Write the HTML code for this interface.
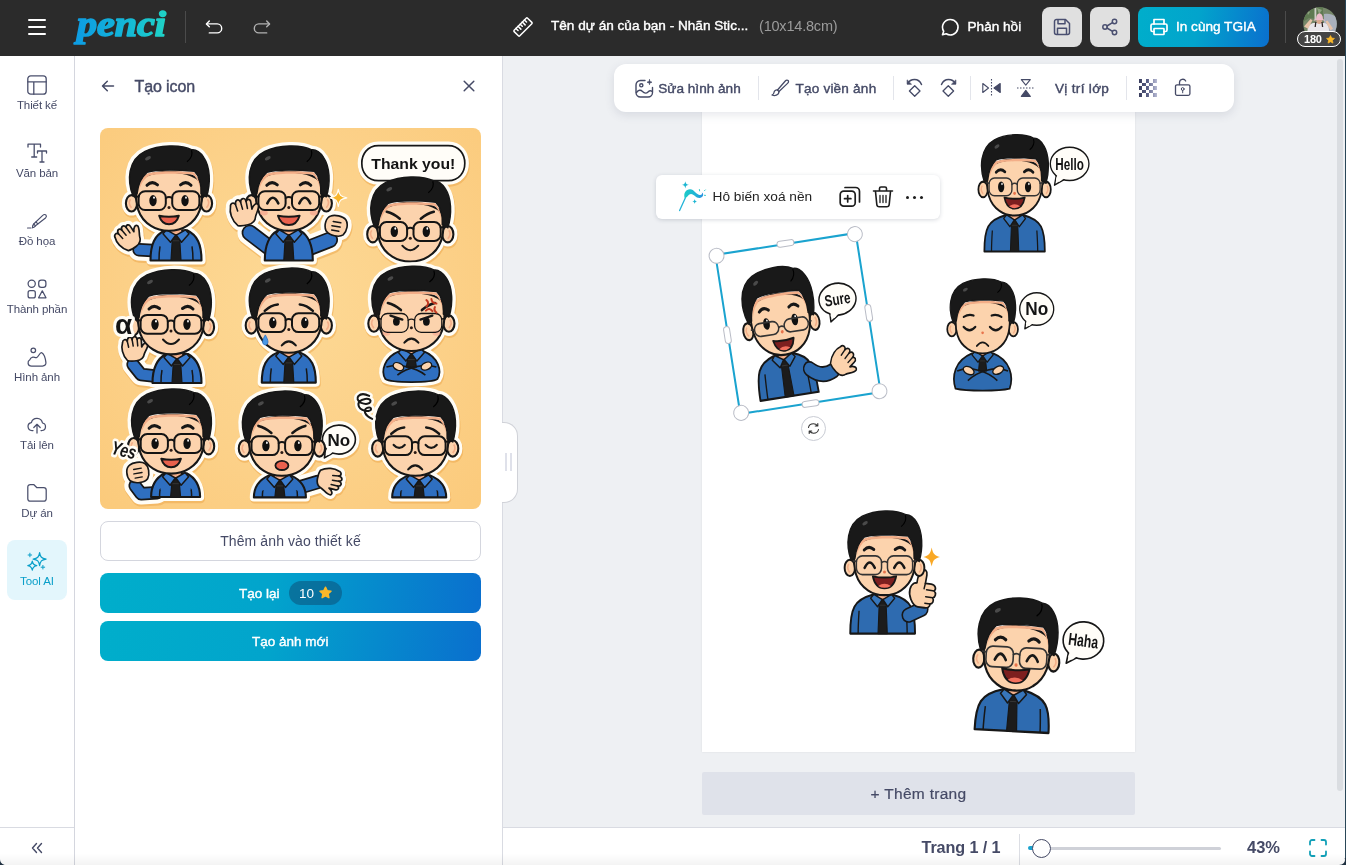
<!DOCTYPE html>
<html lang="vi">
<head>
<meta charset="utf-8">
<title>Penci - Tạo icon</title>
<style>
*{box-sizing:border-box;margin:0;padding:0}
html,body{width:1346px;height:865px;overflow:hidden;background:#eef0f3;-webkit-font-smoothing:antialiased;font-family:"Liberation Sans",sans-serif;color:#454a66}
.abs{position:absolute}
#hdr{position:absolute;left:0;top:0;width:1346px;height:56px;background:#2b2b2b;color:#fff}
#side,#panel,#work,#foot,#hdr{will-change:transform}
#side{position:absolute;left:0;top:56px;width:75px;height:809px;background:#fff;border-right:1px solid #d4d6de}
#panel{z-index:3;position:absolute;left:75px;top:56px;width:428px;height:809px;background:#fff;border-right:1px solid #d9dbe2}
#work{position:absolute;left:503px;top:56px;width:843px;height:771px;background:#eef0f3;overflow:hidden}
#foot{position:absolute;left:503px;top:827px;width:843px;height:38px;background:#fff;border-top:1px solid #d9dbe2}
.nav{position:absolute;left:0;width:74px;text-align:center;font-size:11.5px;color:#454a66;letter-spacing:-0.1px}
.nav svg{display:block;margin:0 auto 4px}
.nav.on{left:7px;width:60px;height:60px;background:#e3f6fc;border-radius:8px;color:#0a9fc9}
svg{overflow:visible}
.sb{-webkit-text-stroke:0.4px currentColor}
.ic{fill:none;stroke:#4a4f6c;stroke-width:1.3;stroke-linecap:round;stroke-linejoin:round}
.btn{position:absolute;left:25px;width:381px;height:40px;border-radius:8px;text-align:center;line-height:40px;font-size:14.5px}
.hd{position:absolute;width:16px;height:16px;border-radius:50%;background:#fff;border:1px solid #b9bcc6}
.hp{position:absolute;background:#fff;border:1px solid #b9bcc6;border-radius:4px}
.grad{background:linear-gradient(100deg,#00aecb 0%,#02a4cc 45%,#0a6fce 100%);color:#fff}
</style>
</head>
<body>
<div id="hdr">
  <div class="abs" style="left:28px;top:18.7px;width:18px;height:2px;background:#fff;border-radius:1px"></div>
  <div class="abs" style="left:28px;top:26px;width:18px;height:2px;background:#fff;border-radius:1px"></div>
  <div class="abs" style="left:28px;top:33.3px;width:18px;height:2px;background:#fff;border-radius:1px"></div>
  <svg class="abs" style="left:70px;top:4px" width="104" height="46" viewBox="0 0 104 46">
    <defs><linearGradient id="lg" x1="0" x2="1" y1="0" y2="0"><stop offset="0" stop-color="#0d9be3"/><stop offset="0.55" stop-color="#13b6d8"/><stop offset="1" stop-color="#1fd3c6"/></linearGradient></defs>
    <text x="7" y="31.500" font-family="Liberation Serif, serif" font-style="italic" font-weight="bold" font-size="35" fill="url(#lg)" stroke="url(#lg)" stroke-width="1.6" stroke-linejoin="round" textLength="89" lengthAdjust="spacingAndGlyphs">penci</text>
  </svg>
  <div class="abs" style="left:185px;top:11px;width:1px;height:32px;background:#4b4b4b"></div>
  <svg class="abs" style="left:204px;top:17px" width="20" height="20" viewBox="0 0 20 20" fill="none" stroke="#fff" stroke-width="1.400" stroke-linecap="round" stroke-linejoin="round"><path d="M5.300 4L2.400 6.900l2.900 2.900"/><path d="M2.700 6.900h10.500a4.500 4.500 0 0 1 0 9H5.300"/></svg>
  <svg class="abs" style="left:252px;top:17px" width="20" height="20" viewBox="0 0 20 20" fill="none" stroke="#b2b2b2" stroke-width="1.400" stroke-linecap="round" stroke-linejoin="round"><path d="M14.700 4l2.900 2.900-2.900 2.900"/><path d="M17.300 6.900H6.800a4.500 4.500 0 0 0 0 9h7.900"/></svg>
  <svg class="abs" style="left:512px;top:16px" width="22" height="22" viewBox="0 0 22 22" fill="none" stroke="#fff" stroke-width="1.500" stroke-linecap="round" stroke-linejoin="round"><g transform="rotate(-45 11 11)"><rect x="1.500" y="7" width="19" height="8" rx="1"/><path d="M5 7v3M8 7v4M11 7v3M14 7v4M17 7v3"/></g></svg>
  <div class="abs sb" id="ttl" style="left:551px;top:18px;font-size:13.6px;color:#fff;white-space:nowrap;letter-spacing:0px">Tên dự án của bạn - Nhãn Stic...</div>
  <div class="abs" id="dim" style="left:759px;top:18px;font-size:14.5px;color:#9b9b9b;white-space:nowrap;letter-spacing:-0.2px">(10x14.8cm)</div>
  <svg class="abs" style="left:940px;top:17px" width="20" height="20" viewBox="0 0 20 20" fill="none" stroke="#fff" stroke-width="1.600" stroke-linecap="round" stroke-linejoin="round"><path d="M10.300 2.500a7.700 7.700 0 1 1-4.100 14.200L2.500 17.800l1.200-3.500A7.700 7.700 0 0 1 10.300 2.500z"/></svg>
  <div class="abs sb" id="ph" style="left:967.5px;top:19px;font-size:13.6px;color:#fff;white-space:nowrap;letter-spacing:0px">Phản hồi</div>
  <div class="abs" style="left:1042px;top:7px;width:40px;height:40px;border-radius:8px;background:#e0e0e0"></div>
  <svg class="abs" style="left:1052px;top:17px" width="20" height="20" viewBox="0 0 20 20" fill="none" stroke="#4a4f70" stroke-width="1.500" stroke-linecap="round" stroke-linejoin="round"><path d="M4.500 2.500h9l4 4v9a2 2 0 0 1-2 2h-11a2 2 0 0 1-2-2v-11a2 2 0 0 1 2-2z"/><path d="M6 2.800v4h7v-4"/><path d="M5.500 17.300v-6h9v6"/></svg>
  <div class="abs" style="left:1090px;top:7px;width:40px;height:40px;border-radius:8px;background:#e0e0e0"></div>
  <svg class="abs" style="left:1100px;top:17px" width="20" height="20" viewBox="0 0 20 20" fill="none" stroke="#4a4f70" stroke-width="1.500" stroke-linecap="round" stroke-linejoin="round"><circle cx="14.500" cy="4.500" r="2.200"/><circle cx="14.500" cy="15.500" r="2.200"/><circle cx="5" cy="10" r="2.200"/><path d="M7 9l5.500-3.400M7 11l5.500 3.400"/></svg>
  <div class="abs grad" style="left:1138px;top:7px;width:131px;height:40px;border-radius:8px"></div>
  <svg class="abs" style="left:1149px;top:17px" width="20" height="20" viewBox="0 0 20 20" fill="none" stroke="#fff" stroke-width="1.700" stroke-linecap="round" stroke-linejoin="round"><path d="M5 7V2.500h10V7"/><path d="M5 14.500H3.500a1.500 1.500 0 0 1-1.500-1.500V8.500A1.500 1.500 0 0 1 3.500 7h13A1.500 1.500 0 0 1 18 8.500V13a1.500 1.500 0 0 1-1.500 1.500H15"/><rect x="5" y="11.500" width="10" height="6" rx="0.500"/></svg>
  <div class="abs sb" id="prt" style="left:1176px;top:19px;font-size:13.6px;color:#fff;white-space:nowrap;letter-spacing:0px">In cùng TGIA</div>
  <div class="abs" style="left:1285px;top:11px;width:1px;height:32px;background:#4b4b4b"></div>
  <svg class="abs" style="left:1302.500px;top:6.500px" width="34" height="34" viewBox="0 0 34 34">
    <defs><clipPath id="avc"><circle cx="17" cy="17" r="16.800"/></clipPath></defs>
    <g clip-path="url(#avc)">
      <rect width="34" height="34" fill="#76876a"/>
      <path d="M0 0h20v9l-6 3-8-1-6 4z" fill="#5f7a52"/>
      <path d="M3 2l4 3-2 3zM14 1l5 2-3 4z" fill="#8fa381"/>
      <path d="M21 7c4-1 8 0 13 3v24H21z" fill="#a9b0bc"/>
      <rect x="11.500" y="0" width="1.800" height="13" fill="#cfd0c8"/>
      <path d="M4.500 24c0-6 4-8 6.500-8h10c3 0 5 3 5 8z" fill="#e9e6ea"/>
      <path d="M1 19.500l6.500-7.500 2 1.300-4.500 8.500zM27.500 23.500l-5-9 2-1 5.500 8z" fill="#e6c2a8"/>
      <ellipse cx="16.200" cy="14.300" rx="2.800" ry="2.600" fill="#d8a78e"/>
      <path d="M13 12.300c0-4 1.800-6 3.500-6s3.500 2 3.500 6c1.200 0.300 1.800 0.800 2 1.500-3-1-8-1-11.500 0 0.200-0.700 1-1.200 2.500-1.500z" fill="#edbccb"/>
      <path d="M12.800 15l-0.600 5M19 15l0.600 5" stroke="#2f2424" stroke-width="1.300" fill="none"/>
    </g>
  </svg>
  <div class="abs" style="left:1297px;top:31px;width:44px;height:16px;border:1px solid #fff;border-radius:8px;background:#454545"></div>
  <div class="abs" id="bdg" style="left:1304px;top:33px;font-size:11px;line-height:12px;font-weight:bold;color:#fff;letter-spacing:-0.2px">180</div>
  <svg class="abs" style="left:1325.500px;top:34.500px" width="9" height="9" viewBox="0 0 24 24"><path d="M12 1.500l3.200 6.700 7.300 1-5.300 5.100 1.300 7.300L12 18.100l-6.500 3.500 1.300-7.300L1.500 9.200l7.300-1z" fill="#fbb829" stroke="#fbb829" stroke-width="2" stroke-linejoin="round"/></svg>
</div>

<div id="side">
  <div class="nav" style="top:19px"><svg width="20" height="20" viewBox="0 0 20 20" class="ic"><rect x="0.800" y="0.800" width="18.400" height="18.400" rx="3"/><path d="M0.800 6.800h18.400M6.800 6.800v12.400"/></svg>Thiết kế</div>
  <div class="nav" style="top:87px"><svg width="20" height="20" viewBox="0 0 20 20" class="ic"><path d="M1 4V1.200h12.500V4M7.200 1.200v12.800M4.700 14h5"/><path d="M10.500 10V8h9v2M15 8v11M13 19h4"/></svg>Văn bản</div>
  <div class="nav" style="top:155px"><svg width="20" height="20" viewBox="0 0 20 20" class="ic" style="stroke-width:1.150"><path d="M0.500 17h3.500"/><path d="M8.500 14.800c-1.500 1.800-3 2-3 2s-0.300-2.200 1.200-3.800z"/><path d="M6.700 13L16 4.200c1-1 2.400-0.800 3 0s0.400 2-0.500 2.800L8.500 14.800"/><path d="M9 11l1.800 1.800"/></svg>Đồ họa</div>
  <div class="nav" style="top:223px"><svg width="20" height="20" viewBox="0 0 20 20" class="ic" style="stroke-width:1.250"><circle cx="4.700" cy="4.700" r="3.600"/><rect x="11.700" y="1.100" width="7.200" height="7.200" rx="2.600"/><rect x="1.100" y="11.700" width="7.200" height="7.200" rx="2"/><path d="M15.300 11.800l3.700 7h-7.400z"/></svg>Thành phần</div>
  <div class="nav" style="top:291px"><svg width="20" height="20" viewBox="0 0 20 20" class="ic" style="stroke-width:1.250"><circle cx="6.300" cy="3.300" r="2.300"/><path d="M2.800 12.800C1.500 13.500 0.900 15 1.100 16.300c0.300 1.700 1.700 2.700 3.400 2.700h11c2.200 0 3.700-1.300 3.400-3.700C18.400 11.500 17 7 14.800 5.800c-2-0.800-3 3.700-5 4.700-1.500 0.600-2.500-0.800-4-0.400-1.500 0.400-2.700 1.500-3 2.700z"/></svg>Hình ảnh</div>
  <div class="nav" style="top:359px"><svg width="20" height="20" viewBox="0 0 20 20" class="ic" style="stroke-width:1.250"><path d="M6 15.500H5a4 4 0 0 1-0.600-7.950A5.700 5.700 0 0 1 15.500 8a3.800 3.800 0 0 1-0.500 7.500h-1"/><path d="M10 18V9.500M6.800 12.500L10 9.300l3.200 3.200"/></svg>Tải lên</div>
  <div class="nav" style="top:427px"><svg width="20" height="20" viewBox="0 0 20 20" class="ic" style="stroke-width:1.250"><path d="M0.800 4a2.500 2.500 0 0 1 2.500-2.500h3.400l3 3h7a2.500 2.500 0 0 1 2.500 2.500v8.700a2.500 2.500 0 0 1-2.500 2.500H3.300a2.500 2.500 0 0 1-2.500-2.500z"/></svg>Dự án</div>
  <div class="nav on" style="top:484px;padding-top:11px"><svg width="20" height="20" viewBox="0 0 20 20" class="ic" style="stroke:#0a9fc9;stroke-width:1.200"><path d="M12.600 1.600c0.700 4.500 2 5.800 6.500 6.500-4.500 0.700-5.800 2-6.500 6.500-0.700-4.500-2-5.800-6.500-6.500 4.500-0.700 5.800-2 6.500-6.500z"/><path d="M5.300 10.100c0.500 3.100 1.400 4 4.500 4.500-3.100 0.500-4 1.400-4.500 4.500-0.500-3.100-1.400-4-4.500-4.500 3.100-0.500 4-1.400 4.500-4.500z"/><path d="M2.900 2.200v3.600M1.100 4h3.600M15.900 14.400v3.600M14.100 16.200h3.600" stroke-width="1"/></svg>Tool AI</div>
  <div class="abs" style="left:0;top:771px;width:74px;height:1px;background:#d9dbe2"></div>
  <svg class="abs" style="left:31px;top:786px" width="12" height="12" viewBox="0 0 12 12" class="ic" fill="none" stroke="#454a66" stroke-width="1.400" stroke-linecap="round" stroke-linejoin="round"><path d="M5.500 1.500L1.500 6l4 4.500M10.500 1.500L6.500 6l4 4.500"/></svg>
</div>

<div id="panel">
  <svg class="abs" style="left:26px;top:23px" width="14" height="14" viewBox="0 0 14 14" fill="none" stroke="#454a66" stroke-width="1.500" stroke-linecap="round" stroke-linejoin="round"><path d="M12.500 7H1.800M6.300 2.200L1.500 7l4.800 4.800"/></svg>
  <div class="abs sb" id="pt" style="left:59.500px;top:21.500px;font-size:16px;color:#454a66;white-space:nowrap;letter-spacing:-0.1px">Tạo icon</div>
  <svg class="abs" style="left:388px;top:24px" width="12" height="12" viewBox="0 0 12 12" fill="none" stroke="#454a66" stroke-width="1.500" stroke-linecap="round"><path d="M1.200 1.200l9.600 9.600M10.800 1.200l-9.600 9.600"/></svg>
  <div class="abs" style="left:25px;top:72px;width:381px;height:381px;border-radius:8px;overflow:hidden;background:radial-gradient(ellipse at 50% 45%,#fdd995 0%,#fcd189 55%,#fbca7b 100%)">
<svg class="abs" style="left:0;top:0" width="381" height="381" viewBox="0 0 381 381"><g transform="translate(69 18.8) scale(1 1)" stroke-linejoin="round"><g transform="translate(0.600 1.800)" fill="#eda94f" stroke="#eda94f" stroke-width="8.8" opacity="0.550"><path d="M-12 104L-30 103" fill="none" stroke-linecap="round" stroke-width="22.2"/><path d="M-8 10C-12.500 4-12.500-4-10.500-8C-10-11.500-6.500-12-5.500-9C-5-13.500-1-14 -0.500-10C0.500-14 4.500-13.500 4.500-9.500C6-12 9-11 8.500-7.500L8-1.500C10-5 13.500-6.500 14.500-4C15-1 11 3 9.500 6C8.500 9.500 5 11.500 1 11.500C-3 11.500-6 11-8 10z" transform="translate(-40.5 91) rotate(-38) scale(1 1)"/><path d="M-18.5 113.7C-18.5 97.5 -14.5 88.5 -4 83.5L18 83.5C28.5 88.5 32.5 97.5 32.5 113.7z"/><path d="M-43.1 56.5a5.6 8.2 0 1 0 11.2 0a5.6 8.2 0 1 0 -11.2 0z"/><path d="M31.9 56.5a5.6 8.2 0 1 0 11.2 0a5.6 8.2 0 1 0 -11.2 0z"/><path d="M-32.5 40C-34 58-31 71-18 79C-8 85.500 8 85.500 18 79C31 71 34 58 33 40C32 20-32 20-32.500 40z"/><path d="M-36 49C-42 34-41.500 13-24 4.500C-10-2 12-2.500 23 3C27 2.500 32 6 35 11C41 20 42 36 37.500 50L32 47C32.500 37 30.500 29.500 25.500 24.500C10 23-12 22.500-22 25.500C-27.500 30-31 38-32 47z"/></g><g fill="#fffdf6" stroke="#fffdf6" stroke-width="8.2"><path d="M-12 104L-30 103" fill="none" stroke-linecap="round" stroke-width="21.6"/><path d="M-8 10C-12.500 4-12.500-4-10.500-8C-10-11.500-6.500-12-5.500-9C-5-13.500-1-14 -0.500-10C0.500-14 4.500-13.500 4.500-9.500C6-12 9-11 8.500-7.500L8-1.500C10-5 13.500-6.500 14.500-4C15-1 11 3 9.500 6C8.500 9.500 5 11.500 1 11.500C-3 11.500-6 11-8 10z" transform="translate(-40.5 91) rotate(-38) scale(1 1)"/><path d="M-18.5 113.7C-18.5 97.5 -14.5 88.5 -4 83.5L18 83.5C28.5 88.5 32.5 97.5 32.5 113.7z"/><path d="M-43.1 56.5a5.6 8.2 0 1 0 11.2 0a5.6 8.2 0 1 0 -11.2 0z"/><path d="M31.9 56.5a5.6 8.2 0 1 0 11.2 0a5.6 8.2 0 1 0 -11.2 0z"/><path d="M-32.5 40C-34 58-31 71-18 79C-8 85.500 8 85.500 18 79C31 71 34 58 33 40C32 20-32 20-32.500 40z"/><path d="M-36 49C-42 34-41.500 13-24 4.500C-10-2 12-2.500 23 3C27 2.500 32 6 35 11C41 20 42 36 37.500 50L32 47C32.500 37 30.500 29.500 25.500 24.500C10 23-12 22.500-22 25.500C-27.500 30-31 38-32 47z"/></g><path d="M-12 104L-30 103" fill="none" stroke="#171717" stroke-width="13.4" stroke-linecap="round" stroke-linejoin="round"/><path d="M-12 104L-30 103" fill="none" stroke="#2f6fc0" stroke-width="10" stroke-linecap="round" stroke-linejoin="round"/><path d="M-8 10C-12.500 4-12.500-4-10.500-8C-10-11.500-6.500-12-5.500-9C-5-13.500-1-14 -0.500-10C0.500-14 4.500-13.500 4.500-9.500C6-12 9-11 8.500-7.500L8-1.500C10-5 13.500-6.500 14.500-4C15-1 11 3 9.500 6C8.500 9.500 5 11.500 1 11.500C-3 11.500-6 11-8 10z" fill="#fcd3ad" stroke="#171717" stroke-width="1.7" stroke-linejoin="round" transform="translate(-40.5 91) rotate(-38) scale(1 1)"/><path d="M-5.500-9L-5-3M-0.500-10L-0.300-3.500M4.500-9.500L4.200-3" fill="none" stroke="#171717" stroke-width="1.5" stroke-linecap="round" transform="translate(-40.5 91) rotate(-38) scale(1 1)"/><path d="M-18.5 113.7C-18.5 97.5 -14.5 88.5 -4 83.5L18 83.5C28.5 88.5 32.5 97.5 32.5 113.7z" fill="#2f6fc0" stroke="#171717" stroke-width="2.1" stroke-linejoin="round"/><path d="M-9 99.5Q-10 105.7 -10 113.7" fill="none" stroke="#171717" stroke-width="1.5"/><path d="M23 99.5Q24 105.7 24 113.7" fill="none" stroke="#171717" stroke-width="1.5"/><path d="M1 80.5L13 80.5L11 88.5L3 88.5z" fill="#f3ae88"/><path d="M3.8 88L10.2 88L10.8 94L12 113.7L2 113.7L3.2 94z" fill="#1c1c1c" stroke="#171717" stroke-width="1.2" stroke-linejoin="round"/><path d="M3.4 94L10.6 94" fill="none" stroke="#3a3a3a" stroke-width="0.8"/><path d="M-2.5 83L6.7 88.3L1.5 95.5L-6 87z" fill="#3b7dd0" stroke="#171717" stroke-width="1.5" stroke-linejoin="round"/><path d="M16.5 83L7.3 88.3L12.5 95.5L20 87z" fill="#3b7dd0" stroke="#171717" stroke-width="1.5" stroke-linejoin="round"/><path d="M-43.1 56.5a5.6 8.2 0 1 0 11.2 0a5.6 8.2 0 1 0 -11.2 0z" fill="#fcd3ad" stroke="#171717" stroke-width="2.1"/><path d="M-38.5 52.500Q-41.5 56.500 -37.5 61" fill="none" stroke="#f3ae88" stroke-width="1.6"/><path d="M31.9 56.5a5.6 8.2 0 1 0 11.2 0a5.6 8.2 0 1 0 -11.2 0z" fill="#fcd3ad" stroke="#171717" stroke-width="2.1"/><path d="M38.5 52.500Q41.5 56.500 37.5 61" fill="none" stroke="#f3ae88" stroke-width="1.6"/><path d="M-32.5 40C-34 58-31 71-18 79C-8 85.500 8 85.500 18 79C31 71 34 58 33 40C32 20-32 20-32.500 40z" fill="#fcd3ad" stroke="#171717" stroke-width="2.1"/><path d="M-30 44C-29 34-26 29-21 26.500C-12 24 12 24 25 25.500C29 30 31 36 31.500 44C30 36 28 31 24 28C12 26.500-10 26.500-20 29C-25 32-28 37-30 44z" fill="#f3ae88"/><path d="M-36 49C-42 34-41.500 13-24 4.500C-10-2 12-2.500 23 3C27 2.500 32 6 35 11C41 20 42 36 37.500 50L32 47C32.500 37 30.500 29.500 25.500 24.500C10 23-12 22.500-22 25.500C-27.500 30-31 38-32 47z" fill="#191919" stroke="#171717" stroke-width="1.5"/><path d="M-24.2 11.5a3.2 1.7 0 1 0 6.4 0a3.2 1.7 0 1 0 -6.4 0z" fill="#4a4a4a" transform="rotate(-28 -21 11.500)"/><path d="M22.500 3.500C24 8 22 12 18 15" fill="none" stroke="#000" stroke-width="1.2"/><path d="M-22 38.5Q-17 33.5 -11.5 38" fill="none" stroke="#171717" stroke-width="3" stroke-linecap="round"/><path d="M22 38.5Q17 33.5 11.5 38" fill="none" stroke="#171717" stroke-width="3" stroke-linecap="round"/><path d="M-19.7 53.8a3.7 5.6 0 1 0 7.4 0a3.7 5.6 0 1 0 -7.4 0z" fill="#111"/><path d="M-15.9 50.8a0.9 1.2 0 1 0 1.8 0a0.9 1.2 0 1 0 -1.8 0z" fill="#fff"/><path d="M12.3 53.8a3.7 5.6 0 1 0 7.4 0a3.7 5.6 0 1 0 -7.4 0z" fill="#111"/><path d="M16.1 50.8a0.9 1.2 0 1 0 1.8 0a0.9 1.2 0 1 0 -1.8 0z" fill="#fff"/><g fill="none" stroke="#141414" stroke-width="2" stroke-linecap="round"><rect x="-30.4" y="44.4" width="27.200" height="18.8" rx="6.500"/><path d="M-30.4 49.9L-33.8 49.4"/><rect x="3.2" y="44.4" width="27.200" height="18.8" rx="6.500"/><path d="M30.4 49.9L33.8 49.4"/><path d="M-3.200 51.2Q0 49 3.200 51.2"/></g><path d="M-1.5 60.6a1.5 1.5 0 1 0 3 0a1.5 1.5 0 1 0 -3 0z" fill="#2a1a14"/><path d="M-9.8 69Q0 71 9.8 69Q7.4 77.5 0 77.5Q-7.4 77.5 -9.8 69z" fill="#e9614d" stroke="#171717" stroke-width="2" stroke-linecap="round" stroke-linejoin="round"/></g><g transform="translate(188.8 18.8) scale(1 1)" stroke-linejoin="round"><g transform="translate(0.600 1.800)" fill="#eda94f" stroke="#eda94f" stroke-width="8.8" opacity="0.550"><path d="M-18 102L-39 86" fill="none" stroke-linecap="round" stroke-width="25.2"/><path d="M18 102L41 93" fill="none" stroke-linecap="round" stroke-width="25.2"/><path d="M-8 6C-11 1-10-6-6-8C-3-10 5-10 8-7C11-4 11 3 8 7C5 10-4 10-8 6z" transform="translate(47 79) rotate(10) scale(1.1 1.1)"/><path d="M-24 113.7C-24 97.5 -20 88.5 -11 83.5L11 83.5C20 88.5 24 97.5 24 113.7z"/><path d="M-43.1 56.5a5.6 8.2 0 1 0 11.2 0a5.6 8.2 0 1 0 -11.2 0z"/><path d="M31.9 56.5a5.6 8.2 0 1 0 11.2 0a5.6 8.2 0 1 0 -11.2 0z"/><path d="M-32.5 40C-34 58-31 71-18 79C-8 85.500 8 85.500 18 79C31 71 34 58 33 40C32 20-32 20-32.500 40z"/><path d="M-36 49C-42 34-41.500 13-24 4.500C-10-2 12-2.500 23 3C27 2.500 32 6 35 11C41 20 42 36 37.500 50L32 47C32.500 37 30.500 29.500 25.500 24.500C10 23-12 22.500-22 25.500C-27.500 30-31 38-32 47z"/><path d="M-8 10C-12.500 4-12.500-4-10.500-8C-10-11.500-6.500-12-5.500-9C-5-13.500-1-14 -0.500-10C0.500-14 4.500-13.500 4.500-9.500C6-12 9-11 8.500-7.500L8-1.500C10-5 13.500-6.500 14.500-4C15-1 11 3 9.500 6C8.500 9.500 5 11.500 1 11.500C-3 11.500-6 11-8 10z" transform="translate(-45 66) rotate(-14) scale(1.1 1.1)"/></g><g fill="#fffdf6" stroke="#fffdf6" stroke-width="8.2"><path d="M-18 102L-39 86" fill="none" stroke-linecap="round" stroke-width="24.6"/><path d="M18 102L41 93" fill="none" stroke-linecap="round" stroke-width="24.6"/><path d="M-8 6C-11 1-10-6-6-8C-3-10 5-10 8-7C11-4 11 3 8 7C5 10-4 10-8 6z" transform="translate(47 79) rotate(10) scale(1.1 1.1)"/><path d="M-24 113.7C-24 97.5 -20 88.5 -11 83.5L11 83.5C20 88.5 24 97.5 24 113.7z"/><path d="M-43.1 56.5a5.6 8.2 0 1 0 11.2 0a5.6 8.2 0 1 0 -11.2 0z"/><path d="M31.9 56.5a5.6 8.2 0 1 0 11.2 0a5.6 8.2 0 1 0 -11.2 0z"/><path d="M-32.5 40C-34 58-31 71-18 79C-8 85.500 8 85.500 18 79C31 71 34 58 33 40C32 20-32 20-32.500 40z"/><path d="M-36 49C-42 34-41.500 13-24 4.500C-10-2 12-2.500 23 3C27 2.500 32 6 35 11C41 20 42 36 37.500 50L32 47C32.500 37 30.500 29.500 25.500 24.500C10 23-12 22.500-22 25.500C-27.500 30-31 38-32 47z"/><path d="M-8 10C-12.500 4-12.500-4-10.500-8C-10-11.500-6.500-12-5.500-9C-5-13.500-1-14 -0.500-10C0.500-14 4.500-13.500 4.500-9.500C6-12 9-11 8.500-7.500L8-1.500C10-5 13.500-6.500 14.500-4C15-1 11 3 9.500 6C8.500 9.500 5 11.500 1 11.500C-3 11.500-6 11-8 10z" transform="translate(-45 66) rotate(-14) scale(1.1 1.1)"/></g><path d="M-18 102L-39 86" fill="none" stroke="#171717" stroke-width="16.4" stroke-linecap="round" stroke-linejoin="round"/><path d="M-18 102L-39 86" fill="none" stroke="#2f6fc0" stroke-width="13" stroke-linecap="round" stroke-linejoin="round"/><path d="M18 102L41 93" fill="none" stroke="#171717" stroke-width="16.4" stroke-linecap="round" stroke-linejoin="round"/><path d="M18 102L41 93" fill="none" stroke="#2f6fc0" stroke-width="13" stroke-linecap="round" stroke-linejoin="round"/><path d="M-8 6C-11 1-10-6-6-8C-3-10 5-10 8-7C11-4 11 3 8 7C5 10-4 10-8 6z" fill="#fcd3ad" stroke="#171717" stroke-width="1.5" stroke-linejoin="round" transform="translate(47 79) rotate(10) scale(1.1 1.1)"/><path d="M-3 -3.500L4-3.500M-3.500 0.500L4 0.500M-3 4.500L3.500 4.500" fill="none" stroke="#171717" stroke-width="1.4" stroke-linecap="round" transform="translate(47 79) rotate(10) scale(1.1 1.1)"/><path d="M-24 113.7C-24 97.5 -20 88.5 -11 83.5L11 83.5C20 88.5 24 97.5 24 113.7z" fill="#2f6fc0" stroke="#171717" stroke-width="2.1" stroke-linejoin="round"/><path d="M-6 80.5L6 80.5L4 88.5L-4 88.5z" fill="#f3ae88"/><path d="M-3.2 88L3.2 88L3.8 94L5 113.7L-5 113.7L-3.8 94z" fill="#1c1c1c" stroke="#171717" stroke-width="1.2" stroke-linejoin="round"/><path d="M-3.6 94L3.6 94" fill="none" stroke="#3a3a3a" stroke-width="0.8"/><path d="M-9.5 83L-0.3 88.3L-5.5 95.5L-13 87z" fill="#3b7dd0" stroke="#171717" stroke-width="1.5" stroke-linejoin="round"/><path d="M9.5 83L0.3 88.3L5.5 95.5L13 87z" fill="#3b7dd0" stroke="#171717" stroke-width="1.5" stroke-linejoin="round"/><path d="M-43.1 56.5a5.6 8.2 0 1 0 11.2 0a5.6 8.2 0 1 0 -11.2 0z" fill="#fcd3ad" stroke="#171717" stroke-width="2.1"/><path d="M-38.5 52.500Q-41.5 56.500 -37.5 61" fill="none" stroke="#f3ae88" stroke-width="1.6"/><path d="M31.9 56.5a5.6 8.2 0 1 0 11.2 0a5.6 8.2 0 1 0 -11.2 0z" fill="#fcd3ad" stroke="#171717" stroke-width="2.1"/><path d="M38.5 52.500Q41.5 56.500 37.5 61" fill="none" stroke="#f3ae88" stroke-width="1.6"/><path d="M-32.5 40C-34 58-31 71-18 79C-8 85.500 8 85.500 18 79C31 71 34 58 33 40C32 20-32 20-32.500 40z" fill="#fcd3ad" stroke="#171717" stroke-width="2.1"/><path d="M-30 44C-29 34-26 29-21 26.500C-12 24 12 24 25 25.500C29 30 31 36 31.500 44C30 36 28 31 24 28C12 26.500-10 26.500-20 29C-25 32-28 37-30 44z" fill="#f3ae88"/><path d="M-36 49C-42 34-41.500 13-24 4.500C-10-2 12-2.500 23 3C27 2.500 32 6 35 11C41 20 42 36 37.500 50L32 47C32.500 37 30.500 29.500 25.500 24.500C10 23-12 22.500-22 25.500C-27.500 30-31 38-32 47z" fill="#191919" stroke="#171717" stroke-width="1.5"/><path d="M-24.2 11.5a3.2 1.7 0 1 0 6.4 0a3.2 1.7 0 1 0 -6.4 0z" fill="#4a4a4a" transform="rotate(-28 -21 11.500)"/><path d="M22.500 3.500C24 8 22 12 18 15" fill="none" stroke="#000" stroke-width="1.2"/><path d="M-22 38.5Q-17 33.5 -11.5 38" fill="none" stroke="#171717" stroke-width="3" stroke-linecap="round"/><path d="M22 38.5Q17 33.5 11.5 38" fill="none" stroke="#171717" stroke-width="3" stroke-linecap="round"/><path d="M-21.5 56.5Q-16 45.5 -10.5 56.5" fill="none" stroke="#171717" stroke-width="2.6" stroke-linecap="round"/><path d="M10.5 56.5Q16 45.5 21.5 56.5" fill="none" stroke="#171717" stroke-width="2.6" stroke-linecap="round"/><path d="M-29 66a4 2.6 0 1 0 8 0a4 2.6 0 1 0 -8 0z" fill="#f6a58e" opacity="0.75"/><path d="M21 66a4 2.6 0 1 0 8 0a4 2.6 0 1 0 -8 0z" fill="#f6a58e" opacity="0.75"/><g fill="none" stroke="#141414" stroke-width="2" stroke-linecap="round"><rect x="-30.4" y="44.4" width="27.200" height="18.8" rx="6.500"/><path d="M-30.4 49.9L-33.8 49.4"/><rect x="3.2" y="44.4" width="27.200" height="18.8" rx="6.500"/><path d="M30.4 49.9L33.8 49.4"/><path d="M-3.200 51.2Q0 49 3.200 51.2"/></g><path d="M-1.5 60.6a1.5 1.5 0 1 0 3 0a1.5 1.5 0 1 0 -3 0z" fill="#2a1a14"/><path d="M-10.8 69Q0 71 10.8 69Q8.1 78.3 0 78.3Q-8.1 78.3 -10.8 69z" fill="#e9614d" stroke="#171717" stroke-width="2" stroke-linecap="round" stroke-linejoin="round"/><path d="M-8 10C-12.500 4-12.500-4-10.500-8C-10-11.500-6.500-12-5.500-9C-5-13.500-1-14 -0.500-10C0.500-14 4.500-13.500 4.500-9.500C6-12 9-11 8.500-7.500L8-1.500C10-5 13.500-6.500 14.500-4C15-1 11 3 9.500 6C8.500 9.500 5 11.500 1 11.500C-3 11.500-6 11-8 10z" fill="#fcd3ad" stroke="#171717" stroke-width="1.5" stroke-linejoin="round" transform="translate(-45 66) rotate(-14) scale(1.1 1.1)"/><path d="M-5.500-9L-5-3M-0.500-10L-0.300-3.500M4.500-9.500L4.200-3" fill="none" stroke="#171717" stroke-width="1.4" stroke-linecap="round" transform="translate(-45 66) rotate(-14) scale(1.1 1.1)"/><path d="M49.500 42.500C50.500 48.500 52 50 58 51C52 52 50.500 53.500 49.500 59.500C48.500 53.500 47 52 41 51C47 50 48.500 48.500 49.500 42.500z" fill="#f7b52c" stroke="#fffdf6" stroke-width="1.2"/></g><g transform="translate(310.3 49.7) scale(1 1)" stroke-linejoin="round"><g transform="translate(0.600 1.800)" fill="#eda94f" stroke="#eda94f" stroke-width="8.8" opacity="0.550"><path d="M-32-32L38-32C60-32 60 3 38 3L-32 3C-54 3-54-32-32-32z"/><path d="M-43.1 56.5a5.6 8.2 0 1 0 11.2 0a5.6 8.2 0 1 0 -11.2 0z"/><path d="M31.9 56.5a5.6 8.2 0 1 0 11.2 0a5.6 8.2 0 1 0 -11.2 0z"/><path d="M-32.5 40C-34 58-31 71-18 79C-8 85.500 8 85.500 18 79C31 71 34 58 33 40C32 20-32 20-32.500 40z"/><path d="M-36 49C-42 34-41.500 13-24 4.500C-10-2 12-2.500 23 3C27 2.500 32 6 35 11C41 20 42 36 37.500 50L32 47C32.500 37 30.500 29.500 25.500 24.500C10 23-12 22.500-22 25.500C-27.500 30-31 38-32 47z"/></g><g fill="#fffdf6" stroke="#fffdf6" stroke-width="8.2"><path d="M-32-32L38-32C60-32 60 3 38 3L-32 3C-54 3-54-32-32-32z"/><path d="M-43.1 56.5a5.6 8.2 0 1 0 11.2 0a5.6 8.2 0 1 0 -11.2 0z"/><path d="M31.9 56.5a5.6 8.2 0 1 0 11.2 0a5.6 8.2 0 1 0 -11.2 0z"/><path d="M-32.5 40C-34 58-31 71-18 79C-8 85.500 8 85.500 18 79C31 71 34 58 33 40C32 20-32 20-32.500 40z"/><path d="M-36 49C-42 34-41.500 13-24 4.500C-10-2 12-2.500 23 3C27 2.500 32 6 35 11C41 20 42 36 37.500 50L32 47C32.500 37 30.500 29.500 25.500 24.500C10 23-12 22.500-22 25.500C-27.500 30-31 38-32 47z"/></g><path d="M-32-32L38-32C60-32 60 3 38 3L-32 3C-54 3-54-32-32-32z" fill="#fffdf8" stroke="#171717" stroke-width="1.7"/><text x="3" y="-9" text-anchor="middle" font-family="Liberation Sans, sans-serif" font-weight="bold" font-size="15.500" fill="#141414" textLength="84" lengthAdjust="spacingAndGlyphs">Thank you!</text><path d="M-43.1 56.5a5.6 8.2 0 1 0 11.2 0a5.6 8.2 0 1 0 -11.2 0z" fill="#fcd3ad" stroke="#171717" stroke-width="2.1"/><path d="M-38.5 52.500Q-41.5 56.500 -37.5 61" fill="none" stroke="#f3ae88" stroke-width="1.6"/><path d="M31.9 56.5a5.6 8.2 0 1 0 11.2 0a5.6 8.2 0 1 0 -11.2 0z" fill="#fcd3ad" stroke="#171717" stroke-width="2.1"/><path d="M38.5 52.500Q41.5 56.500 37.5 61" fill="none" stroke="#f3ae88" stroke-width="1.6"/><path d="M-32.5 40C-34 58-31 71-18 79C-8 85.500 8 85.500 18 79C31 71 34 58 33 40C32 20-32 20-32.500 40z" fill="#fcd3ad" stroke="#171717" stroke-width="2.1"/><path d="M-30 44C-29 34-26 29-21 26.500C-12 24 12 24 25 25.500C29 30 31 36 31.500 44C30 36 28 31 24 28C12 26.500-10 26.500-20 29C-25 32-28 37-30 44z" fill="#f3ae88"/><path d="M-36 49C-42 34-41.500 13-24 4.500C-10-2 12-2.500 23 3C27 2.500 32 6 35 11C41 20 42 36 37.500 50L32 47C32.500 37 30.500 29.500 25.500 24.500C10 23-12 22.500-22 25.500C-27.500 30-31 38-32 47z" fill="#191919" stroke="#171717" stroke-width="1.5"/><path d="M-24.2 11.5a3.2 1.7 0 1 0 6.4 0a3.2 1.7 0 1 0 -6.4 0z" fill="#4a4a4a" transform="rotate(-28 -21 11.500)"/><path d="M22.500 3.500C24 8 22 12 18 15" fill="none" stroke="#000" stroke-width="1.2"/><path d="M-23.5 34Q-17 35.5 -10.5 41" fill="none" stroke="#171717" stroke-width="2.6" stroke-linecap="round"/><path d="M23.5 34Q17 35.5 10.5 41" fill="none" stroke="#171717" stroke-width="2.6" stroke-linecap="round"/><path d="M-19.7 53.8a3.7 5.6 0 1 0 7.4 0a3.7 5.6 0 1 0 -7.4 0z" fill="#111"/><path d="M-15.9 50.8a0.9 1.2 0 1 0 1.8 0a0.9 1.2 0 1 0 -1.8 0z" fill="#fff"/><path d="M12.3 53.8a3.7 5.6 0 1 0 7.4 0a3.7 5.6 0 1 0 -7.4 0z" fill="#111"/><path d="M16.1 50.8a0.9 1.2 0 1 0 1.8 0a0.9 1.2 0 1 0 -1.8 0z" fill="#fff"/><g fill="none" stroke="#141414" stroke-width="2" stroke-linecap="round"><rect x="-30.4" y="44.4" width="27.200" height="18.8" rx="6.500"/><path d="M-30.4 49.9L-33.8 49.4"/><rect x="3.2" y="44.4" width="27.200" height="18.8" rx="6.500"/><path d="M30.4 49.9L33.8 49.4"/><path d="M-3.200 51.2Q0 49 3.200 51.2"/></g><path d="M-1.5 60.6a1.5 1.5 0 1 0 3 0a1.5 1.5 0 1 0 -3 0z" fill="#2a1a14"/><path d="M-8 68Q0 77 8 68" fill="none" stroke="#171717" stroke-width="2" stroke-linecap="round" stroke-linejoin="round"/></g><g transform="translate(71 142.5) scale(1 1)" stroke-linejoin="round"><g transform="translate(0.600 1.800)" fill="#eda94f" stroke="#eda94f" stroke-width="8.8" opacity="0.550"><path d="M-12 106L-30 104L-38 94" fill="none" stroke-linecap="round" stroke-width="22.2"/><path d="M-8 10C-12.500 4-12.500-4-10.500-8C-10-11.500-6.500-12-5.500-9C-5-13.500-1-14 -0.500-10C0.500-14 4.500-13.500 4.500-9.500C6-12 9-11 8.500-7.500L8-1.500C10-5 13.500-6.500 14.500-4C15-1 11 3 9.500 6C8.500 9.500 5 11.500 1 11.500C-3 11.500-6 11-8 10z" transform="translate(-37 79) rotate(-8) scale(1 1)"/><path d="M-18.5 112.5C-18.5 97.5 -14.5 88.5 -5 83.5L17 83.5C26.5 88.5 30.5 97.5 30.5 112.5z"/><path d="M-43.1 56.5a5.6 8.2 0 1 0 11.2 0a5.6 8.2 0 1 0 -11.2 0z"/><path d="M31.9 56.5a5.6 8.2 0 1 0 11.2 0a5.6 8.2 0 1 0 -11.2 0z"/><path d="M-32.5 40C-34 58-31 71-18 79C-8 85.500 8 85.500 18 79C31 71 34 58 33 40C32 20-32 20-32.500 40z"/><path d="M-36 49C-42 34-41.500 13-24 4.500C-10-2 12-2.500 23 3C27 2.500 32 6 35 11C41 20 42 36 37.500 50L32 47C32.500 37 30.500 29.500 25.500 24.500C10 23-12 22.500-22 25.500C-27.500 30-31 38-32 47z"/></g><g fill="#fffdf6" stroke="#fffdf6" stroke-width="8.2"><path d="M-12 106L-30 104L-38 94" fill="none" stroke-linecap="round" stroke-width="21.6"/><path d="M-8 10C-12.500 4-12.500-4-10.500-8C-10-11.500-6.500-12-5.500-9C-5-13.500-1-14 -0.500-10C0.500-14 4.500-13.500 4.500-9.500C6-12 9-11 8.500-7.500L8-1.500C10-5 13.500-6.500 14.500-4C15-1 11 3 9.500 6C8.500 9.500 5 11.500 1 11.500C-3 11.500-6 11-8 10z" transform="translate(-37 79) rotate(-8) scale(1 1)"/><path d="M-18.5 112.5C-18.5 97.5 -14.5 88.5 -5 83.5L17 83.5C26.5 88.5 30.5 97.5 30.5 112.5z"/><path d="M-43.1 56.5a5.6 8.2 0 1 0 11.2 0a5.6 8.2 0 1 0 -11.2 0z"/><path d="M31.9 56.5a5.6 8.2 0 1 0 11.2 0a5.6 8.2 0 1 0 -11.2 0z"/><path d="M-32.5 40C-34 58-31 71-18 79C-8 85.500 8 85.500 18 79C31 71 34 58 33 40C32 20-32 20-32.500 40z"/><path d="M-36 49C-42 34-41.500 13-24 4.500C-10-2 12-2.500 23 3C27 2.500 32 6 35 11C41 20 42 36 37.500 50L32 47C32.500 37 30.500 29.500 25.500 24.500C10 23-12 22.500-22 25.500C-27.500 30-31 38-32 47z"/></g><path d="M-12 106L-30 104L-38 94" fill="none" stroke="#171717" stroke-width="13.4" stroke-linecap="round" stroke-linejoin="round"/><path d="M-12 106L-30 104L-38 94" fill="none" stroke="#2f6fc0" stroke-width="10" stroke-linecap="round" stroke-linejoin="round"/><path d="M-8 10C-12.500 4-12.500-4-10.500-8C-10-11.500-6.500-12-5.500-9C-5-13.500-1-14 -0.500-10C0.500-14 4.500-13.500 4.500-9.500C6-12 9-11 8.500-7.500L8-1.500C10-5 13.500-6.500 14.500-4C15-1 11 3 9.500 6C8.500 9.500 5 11.500 1 11.500C-3 11.500-6 11-8 10z" fill="#fcd3ad" stroke="#171717" stroke-width="1.7" stroke-linejoin="round" transform="translate(-37 79) rotate(-8) scale(1 1)"/><path d="M-5.500-9L-5-3M-0.500-10L-0.300-3.500M4.500-9.500L4.200-3" fill="none" stroke="#171717" stroke-width="1.5" stroke-linecap="round" transform="translate(-37 79) rotate(-8) scale(1 1)"/><path d="M-18.5 112.5C-18.5 97.5 -14.5 88.5 -5 83.5L17 83.5C26.5 88.5 30.5 97.5 30.5 112.5z" fill="#2f6fc0" stroke="#171717" stroke-width="2.1" stroke-linejoin="round"/><path d="M-9 99.5Q-10 104.5 -10 112.5" fill="none" stroke="#171717" stroke-width="1.5"/><path d="M21 99.5Q22 104.5 22 112.5" fill="none" stroke="#171717" stroke-width="1.5"/><path d="M0 80.5L12 80.5L10 88.5L2 88.5z" fill="#f3ae88"/><path d="M2.8 88L9.2 88L9.8 94L11 112.5L1 112.5L2.2 94z" fill="#1c1c1c" stroke="#171717" stroke-width="1.2" stroke-linejoin="round"/><path d="M2.4 94L9.6 94" fill="none" stroke="#3a3a3a" stroke-width="0.8"/><path d="M-3.5 83L5.7 88.3L0.5 95.5L-7 87z" fill="#3b7dd0" stroke="#171717" stroke-width="1.5" stroke-linejoin="round"/><path d="M15.5 83L6.3 88.3L11.5 95.5L19 87z" fill="#3b7dd0" stroke="#171717" stroke-width="1.5" stroke-linejoin="round"/><path d="M-43.1 56.5a5.6 8.2 0 1 0 11.2 0a5.6 8.2 0 1 0 -11.2 0z" fill="#fcd3ad" stroke="#171717" stroke-width="2.1"/><path d="M-38.5 52.500Q-41.5 56.500 -37.5 61" fill="none" stroke="#f3ae88" stroke-width="1.6"/><path d="M31.9 56.5a5.6 8.2 0 1 0 11.2 0a5.6 8.2 0 1 0 -11.2 0z" fill="#fcd3ad" stroke="#171717" stroke-width="2.1"/><path d="M38.5 52.500Q41.5 56.500 37.5 61" fill="none" stroke="#f3ae88" stroke-width="1.6"/><path d="M-32.5 40C-34 58-31 71-18 79C-8 85.500 8 85.500 18 79C31 71 34 58 33 40C32 20-32 20-32.500 40z" fill="#fcd3ad" stroke="#171717" stroke-width="2.1"/><path d="M-30 44C-29 34-26 29-21 26.500C-12 24 12 24 25 25.500C29 30 31 36 31.500 44C30 36 28 31 24 28C12 26.500-10 26.500-20 29C-25 32-28 37-30 44z" fill="#f3ae88"/><path d="M-36 49C-42 34-41.500 13-24 4.500C-10-2 12-2.500 23 3C27 2.500 32 6 35 11C41 20 42 36 37.500 50L32 47C32.500 37 30.500 29.500 25.500 24.500C10 23-12 22.500-22 25.500C-27.500 30-31 38-32 47z" fill="#191919" stroke="#171717" stroke-width="1.5"/><path d="M-24.2 11.5a3.2 1.7 0 1 0 6.4 0a3.2 1.7 0 1 0 -6.4 0z" fill="#4a4a4a" transform="rotate(-28 -21 11.500)"/><path d="M22.500 3.500C24 8 22 12 18 15" fill="none" stroke="#000" stroke-width="1.2"/><path d="M-22 38.5Q-17 33.5 -11.5 38" fill="none" stroke="#171717" stroke-width="3" stroke-linecap="round"/><path d="M22 38.5Q17 33.5 11.5 38" fill="none" stroke="#171717" stroke-width="3" stroke-linecap="round"/><path d="M-19.7 53.8a3.7 5.6 0 1 0 7.4 0a3.7 5.6 0 1 0 -7.4 0z" fill="#111"/><path d="M-15.9 50.8a0.9 1.2 0 1 0 1.8 0a0.9 1.2 0 1 0 -1.8 0z" fill="#fff"/><path d="M12.3 53.8a3.7 5.6 0 1 0 7.4 0a3.7 5.6 0 1 0 -7.4 0z" fill="#111"/><path d="M16.1 50.8a0.9 1.2 0 1 0 1.8 0a0.9 1.2 0 1 0 -1.8 0z" fill="#fff"/><g fill="none" stroke="#141414" stroke-width="2" stroke-linecap="round"><rect x="-30.4" y="44.4" width="27.200" height="18.8" rx="6.500"/><path d="M-30.4 49.9L-33.8 49.4"/><rect x="3.2" y="44.4" width="27.200" height="18.8" rx="6.500"/><path d="M30.4 49.9L33.8 49.4"/><path d="M-3.200 51.2Q0 49 3.200 51.2"/></g><path d="M-1.5 60.6a1.5 1.5 0 1 0 3 0a1.5 1.5 0 1 0 -3 0z" fill="#2a1a14"/><path d="M-8 69Q0 78 8 69" fill="none" stroke="#171717" stroke-width="2" stroke-linecap="round" stroke-linejoin="round"/><text x="-47.500" y="63.500" text-anchor="middle" font-family="Liberation Sans, sans-serif" font-weight="bold" font-size="28" fill="#141414" stroke="#fffdf6" stroke-width="6" paint-order="stroke" stroke-linejoin="round">α</text></g><g transform="translate(188.8 140.9) scale(1 1)" stroke-linejoin="round"><g transform="translate(0.600 1.800)" fill="#eda94f" stroke="#eda94f" stroke-width="8.8" opacity="0.550"><path d="M-27 113.7C-27 97.5 -23 88.5 -11 83.5L11 83.5C23 88.5 27 97.5 27 113.7z"/><path d="M-43.1 56.5a5.6 8.2 0 1 0 11.2 0a5.6 8.2 0 1 0 -11.2 0z"/><path d="M31.9 56.5a5.6 8.2 0 1 0 11.2 0a5.6 8.2 0 1 0 -11.2 0z"/><path d="M-32.5 40C-34 58-31 71-18 79C-8 85.500 8 85.500 18 79C31 71 34 58 33 40C32 20-32 20-32.500 40z"/><path d="M-36 49C-42 34-41.500 13-24 4.500C-10-2 12-2.500 23 3C27 2.500 32 6 35 11C41 20 42 36 37.500 50L32 47C32.500 37 30.500 29.500 25.500 24.500C10 23-12 22.500-22 25.500C-27.500 30-31 38-32 47z"/></g><g fill="#fffdf6" stroke="#fffdf6" stroke-width="8.2"><path d="M-27 113.7C-27 97.5 -23 88.5 -11 83.5L11 83.5C23 88.5 27 97.5 27 113.7z"/><path d="M-43.1 56.5a5.6 8.2 0 1 0 11.2 0a5.6 8.2 0 1 0 -11.2 0z"/><path d="M31.9 56.5a5.6 8.2 0 1 0 11.2 0a5.6 8.2 0 1 0 -11.2 0z"/><path d="M-32.5 40C-34 58-31 71-18 79C-8 85.500 8 85.500 18 79C31 71 34 58 33 40C32 20-32 20-32.500 40z"/><path d="M-36 49C-42 34-41.500 13-24 4.500C-10-2 12-2.500 23 3C27 2.500 32 6 35 11C41 20 42 36 37.500 50L32 47C32.500 37 30.500 29.500 25.500 24.500C10 23-12 22.500-22 25.500C-27.500 30-31 38-32 47z"/></g><path d="M-27 113.7C-27 97.5 -23 88.5 -11 83.5L11 83.5C23 88.5 27 97.5 27 113.7z" fill="#2f6fc0" stroke="#171717" stroke-width="2.1" stroke-linejoin="round"/><path d="M-17.5 99.5Q-18.5 105.7 -18.5 113.7" fill="none" stroke="#171717" stroke-width="1.5"/><path d="M17.5 99.5Q18.5 105.7 18.5 113.7" fill="none" stroke="#171717" stroke-width="1.5"/><path d="M-6 80.5L6 80.5L4 88.5L-4 88.5z" fill="#f3ae88"/><path d="M-3.2 88L3.2 88L3.8 94L5 113.7L-5 113.7L-3.8 94z" fill="#1c1c1c" stroke="#171717" stroke-width="1.2" stroke-linejoin="round"/><path d="M-3.6 94L3.6 94" fill="none" stroke="#3a3a3a" stroke-width="0.8"/><path d="M-9.5 83L-0.3 88.3L-5.5 95.5L-13 87z" fill="#3b7dd0" stroke="#171717" stroke-width="1.5" stroke-linejoin="round"/><path d="M9.5 83L0.3 88.3L5.5 95.5L13 87z" fill="#3b7dd0" stroke="#171717" stroke-width="1.5" stroke-linejoin="round"/><path d="M-43.1 56.5a5.6 8.2 0 1 0 11.2 0a5.6 8.2 0 1 0 -11.2 0z" fill="#fcd3ad" stroke="#171717" stroke-width="2.1"/><path d="M-38.5 52.500Q-41.5 56.500 -37.5 61" fill="none" stroke="#f3ae88" stroke-width="1.6"/><path d="M31.9 56.5a5.6 8.2 0 1 0 11.2 0a5.6 8.2 0 1 0 -11.2 0z" fill="#fcd3ad" stroke="#171717" stroke-width="2.1"/><path d="M38.5 52.500Q41.5 56.500 37.5 61" fill="none" stroke="#f3ae88" stroke-width="1.6"/><path d="M-32.5 40C-34 58-31 71-18 79C-8 85.500 8 85.500 18 79C31 71 34 58 33 40C32 20-32 20-32.500 40z" fill="#fcd3ad" stroke="#171717" stroke-width="2.1"/><path d="M-30 44C-29 34-26 29-21 26.500C-12 24 12 24 25 25.500C29 30 31 36 31.500 44C30 36 28 31 24 28C12 26.500-10 26.500-20 29C-25 32-28 37-30 44z" fill="#f3ae88"/><path d="M-36 49C-42 34-41.500 13-24 4.500C-10-2 12-2.500 23 3C27 2.500 32 6 35 11C41 20 42 36 37.500 50L32 47C32.500 37 30.500 29.500 25.500 24.500C10 23-12 22.500-22 25.500C-27.500 30-31 38-32 47z" fill="#191919" stroke="#171717" stroke-width="1.5"/><path d="M-24.2 11.5a3.2 1.7 0 1 0 6.4 0a3.2 1.7 0 1 0 -6.4 0z" fill="#4a4a4a" transform="rotate(-28 -21 11.500)"/><path d="M22.500 3.500C24 8 22 12 18 15" fill="none" stroke="#000" stroke-width="1.2"/><path d="M-24 42Q-18 36 -11 35.5" fill="none" stroke="#171717" stroke-width="2.5" stroke-linecap="round"/><path d="M24 42Q18 36 11 35.5" fill="none" stroke="#171717" stroke-width="2.5" stroke-linecap="round"/><path d="M-19.7 53.8a3.7 5.6 0 1 0 7.4 0a3.7 5.6 0 1 0 -7.4 0z" fill="#111"/><path d="M-15.9 50.8a0.9 1.2 0 1 0 1.8 0a0.9 1.2 0 1 0 -1.8 0z" fill="#fff"/><path d="M12.3 53.8a3.7 5.6 0 1 0 7.4 0a3.7 5.6 0 1 0 -7.4 0z" fill="#111"/><path d="M16.1 50.8a0.9 1.2 0 1 0 1.8 0a0.9 1.2 0 1 0 -1.8 0z" fill="#fff"/><g fill="none" stroke="#141414" stroke-width="2" stroke-linecap="round"><rect x="-30.4" y="44.4" width="27.200" height="18.8" rx="6.500"/><path d="M-30.4 49.9L-33.8 49.4"/><rect x="3.2" y="44.4" width="27.200" height="18.8" rx="6.500"/><path d="M30.4 49.9L33.8 49.4"/><path d="M-3.200 51.2Q0 49 3.200 51.2"/></g><path d="M-1.5 60.6a1.5 1.5 0 1 0 3 0a1.5 1.5 0 1 0 -3 0z" fill="#2a1a14"/><path d="M-7 76.5Q0 68.5 7 76.5" fill="none" stroke="#171717" stroke-width="2.1" stroke-linecap="round" stroke-linejoin="round"/><path d="M-23.500 66C-26.800 71.500-27.300 75.500-23.500 76C-19.700 75.500-20.200 71.500-23.500 66z" fill="#4a98e6" stroke="#2a6fc0" stroke-width="0.8"/></g><g transform="translate(311.4 139.1) scale(1 1)" stroke-linejoin="round"><g transform="translate(0.600 1.800)" fill="#eda94f" stroke="#eda94f" stroke-width="8.8" opacity="0.550"><path d="M-26 112C-31 104-27 90-12 84L12 84C27 90 31 104 26 112C20 116-20 116-26 112z"/><path d="M-43.1 56.5a5.6 8.2 0 1 0 11.2 0a5.6 8.2 0 1 0 -11.2 0z"/><path d="M31.9 56.5a5.6 8.2 0 1 0 11.2 0a5.6 8.2 0 1 0 -11.2 0z"/><path d="M-32.5 40C-34 58-31 71-18 79C-8 85.500 8 85.500 18 79C31 71 34 58 33 40C32 20-32 20-32.500 40z"/><path d="M-36 49C-42 34-41.500 13-24 4.500C-10-2 12-2.500 23 3C27 2.500 32 6 35 11C41 20 42 36 37.500 50L32 47C32.500 37 30.500 29.500 25.500 24.500C10 23-12 22.500-22 25.500C-27.500 30-31 38-32 47z"/></g><g fill="#fffdf6" stroke="#fffdf6" stroke-width="8.2"><path d="M-26 112C-31 104-27 90-12 84L12 84C27 90 31 104 26 112C20 116-20 116-26 112z"/><path d="M-43.1 56.5a5.6 8.2 0 1 0 11.2 0a5.6 8.2 0 1 0 -11.2 0z"/><path d="M31.9 56.5a5.6 8.2 0 1 0 11.2 0a5.6 8.2 0 1 0 -11.2 0z"/><path d="M-32.5 40C-34 58-31 71-18 79C-8 85.500 8 85.500 18 79C31 71 34 58 33 40C32 20-32 20-32.500 40z"/><path d="M-36 49C-42 34-41.500 13-24 4.500C-10-2 12-2.500 23 3C27 2.500 32 6 35 11C41 20 42 36 37.500 50L32 47C32.500 37 30.500 29.500 25.500 24.500C10 23-12 22.500-22 25.500C-27.500 30-31 38-32 47z"/></g><path d="M-26 112C-31 104-27 90-12 84L12 84C27 90 31 104 26 112C20 116-20 116-26 112z" fill="#2f6fc0" stroke="#171717" stroke-width="1.8"/><path d="M-6 79L6 79L4 87L-4 87z" fill="#f3ae88"/><path d="M-3.2 86.5L3.2 86.5L3.8 92.5L5 100L-5 100L-3.8 92.5z" fill="#1c1c1c" stroke="#171717" stroke-width="1.2" stroke-linejoin="round"/><path d="M-3.6 92.5L3.6 92.5" fill="none" stroke="#3a3a3a" stroke-width="0.8"/><path d="M-9.5 81.5L-0.3 86.8L-5.5 94L-13 85.5z" fill="#3b7dd0" stroke="#171717" stroke-width="1.5" stroke-linejoin="round"/><path d="M9.5 81.5L0.3 86.8L5.5 94L13 85.5z" fill="#3b7dd0" stroke="#171717" stroke-width="1.5" stroke-linejoin="round"/><path d="M-25 100C-14 96 4 100 14 108" fill="none" stroke="#171717" stroke-width="1.6"/><path d="M25 100C14 96-4 100-14 108" fill="none" stroke="#171717" stroke-width="1.6"/><path d="M-18.5 99.5a5.5 3.6 0 1 0 11 0a5.5 3.6 0 1 0 -11 0z" fill="#fcd3ad" stroke="#171717" stroke-width="1.4" transform="rotate(25 -13 99.500)"/><path d="M9.5 99a5.5 3.6 0 1 0 11 0a5.5 3.6 0 1 0 -11 0z" fill="#fcd3ad" stroke="#171717" stroke-width="1.4" transform="rotate(-25 15 99)"/><path d="M-43.1 56.5a5.6 8.2 0 1 0 11.2 0a5.6 8.2 0 1 0 -11.2 0z" fill="#fcd3ad" stroke="#171717" stroke-width="2.1"/><path d="M-38.5 52.500Q-41.5 56.500 -37.5 61" fill="none" stroke="#f3ae88" stroke-width="1.6"/><path d="M31.9 56.5a5.6 8.2 0 1 0 11.2 0a5.6 8.2 0 1 0 -11.2 0z" fill="#fcd3ad" stroke="#171717" stroke-width="2.1"/><path d="M38.5 52.500Q41.5 56.500 37.5 61" fill="none" stroke="#f3ae88" stroke-width="1.6"/><path d="M-32.5 40C-34 58-31 71-18 79C-8 85.500 8 85.500 18 79C31 71 34 58 33 40C32 20-32 20-32.500 40z" fill="#fcd3ad" stroke="#171717" stroke-width="2.1"/><path d="M-30 44C-29 34-26 29-21 26.500C-12 24 12 24 25 25.500C29 30 31 36 31.500 44C30 36 28 31 24 28C12 26.500-10 26.500-20 29C-25 32-28 37-30 44z" fill="#f3ae88"/><path d="M-36 49C-42 34-41.500 13-24 4.500C-10-2 12-2.500 23 3C27 2.500 32 6 35 11C41 20 42 36 37.500 50L32 47C32.500 37 30.500 29.500 25.500 24.500C10 23-12 22.500-22 25.500C-27.500 30-31 38-32 47z" fill="#191919" stroke="#171717" stroke-width="1.5"/><path d="M-24.2 11.5a3.2 1.7 0 1 0 6.4 0a3.2 1.7 0 1 0 -6.4 0z" fill="#4a4a4a" transform="rotate(-28 -21 11.500)"/><path d="M22.500 3.500C24 8 22 12 18 15" fill="none" stroke="#000" stroke-width="1.2"/><path d="M-29 66a4 2.6 0 1 0 8 0a4 2.6 0 1 0 -8 0z" fill="#f6a58e" opacity="0.6"/><path d="M21 66a4 2.6 0 1 0 8 0a4 2.6 0 1 0 -8 0z" fill="#f6a58e" opacity="0.6"/><path d="M-23.5 36Q-17 37.5 -10.5 43" fill="none" stroke="#171717" stroke-width="2.6" stroke-linecap="round"/><path d="M23.5 36Q17 37.5 10.5 43" fill="none" stroke="#171717" stroke-width="2.6" stroke-linecap="round"/><path d="M-18.4 54.5a3.4 4.2 0 1 0 6.8 0a3.4 4.2 0 1 0 -6.8 0z" fill="#111"/><path d="M-21 48.5L-9 52.5" fill="none" stroke="#171717" stroke-width="2.2" stroke-linecap="round"/><path d="M11.6 54.5a3.4 4.2 0 1 0 6.8 0a3.4 4.2 0 1 0 -6.8 0z" fill="#111"/><path d="M21 48.5L9 52.5" fill="none" stroke="#171717" stroke-width="2.2" stroke-linecap="round"/><g fill="none" stroke="#141414" stroke-width="1.3" stroke-linecap="round"><rect x="-30.4" y="46.4" width="27.200" height="18.8" rx="6.500"/><path d="M-30.4 51.9L-33.8 51.4"/><rect x="3.2" y="46.4" width="27.200" height="18.8" rx="6.500"/><path d="M30.4 51.9L33.8 51.4"/><path d="M-3.200 53.2Q0 51 3.200 53.2"/></g><path d="M-1.5 60.6a1.5 1.5 0 1 0 3 0a1.5 1.5 0 1 0 -3 0z" fill="#2a1a14"/><path d="M-7 75.5Q0 67.5 7 75.5" fill="none" stroke="#171717" stroke-width="2.1" stroke-linecap="round" stroke-linejoin="round"/><path d="M15 33Q18.500 36 15 39.500M20 32Q20.500 36 25 36.500M14.500 43.500Q18 40 21 44M23.500 40Q22 43 25 45.500" fill="none" stroke="#c23a22" stroke-width="2" stroke-linecap="round"/></g><g transform="translate(71.1 261.7) scale(1 1)" stroke-linejoin="round"><g transform="translate(0.600 1.800)" fill="#eda94f" stroke="#eda94f" stroke-width="8.8" opacity="0.550"><path d="M-14 103L-30 104L-36 96" fill="none" stroke-linecap="round" stroke-width="22.2"/><path d="M-8 6C-11 1-10-6-6-8C-3-10 5-10 8-7C11-4 11 3 8 7C5 10-4 10-8 6z" transform="translate(-33.5 83) rotate(-10) scale(1.1 1.1)"/><path d="M-20 107.3C-20 97.5 -16 88.5 -6.5 83.5L15.5 83.5C25 88.5 29 97.5 29 107.3z"/><path d="M-43.1 56.5a5.6 8.2 0 1 0 11.2 0a5.6 8.2 0 1 0 -11.2 0z"/><path d="M31.9 56.5a5.6 8.2 0 1 0 11.2 0a5.6 8.2 0 1 0 -11.2 0z"/><path d="M-32.5 40C-34 58-31 71-18 79C-8 85.500 8 85.500 18 79C31 71 34 58 33 40C32 20-32 20-32.500 40z"/><path d="M-36 49C-42 34-41.500 13-24 4.500C-10-2 12-2.500 23 3C27 2.500 32 6 35 11C41 20 42 36 37.500 50L32 47C32.500 37 30.500 29.500 25.500 24.500C10 23-12 22.500-22 25.500C-27.500 30-31 38-32 47z"/></g><g fill="#fffdf6" stroke="#fffdf6" stroke-width="8.2"><path d="M-14 103L-30 104L-36 96" fill="none" stroke-linecap="round" stroke-width="21.6"/><path d="M-8 6C-11 1-10-6-6-8C-3-10 5-10 8-7C11-4 11 3 8 7C5 10-4 10-8 6z" transform="translate(-33.5 83) rotate(-10) scale(1.1 1.1)"/><path d="M-20 107.3C-20 97.5 -16 88.5 -6.5 83.5L15.5 83.5C25 88.5 29 97.5 29 107.3z"/><path d="M-43.1 56.5a5.6 8.2 0 1 0 11.2 0a5.6 8.2 0 1 0 -11.2 0z"/><path d="M31.9 56.5a5.6 8.2 0 1 0 11.2 0a5.6 8.2 0 1 0 -11.2 0z"/><path d="M-32.5 40C-34 58-31 71-18 79C-8 85.500 8 85.500 18 79C31 71 34 58 33 40C32 20-32 20-32.500 40z"/><path d="M-36 49C-42 34-41.500 13-24 4.500C-10-2 12-2.500 23 3C27 2.500 32 6 35 11C41 20 42 36 37.500 50L32 47C32.500 37 30.500 29.500 25.500 24.500C10 23-12 22.500-22 25.500C-27.500 30-31 38-32 47z"/></g><path d="M-14 103L-30 104L-36 96" fill="none" stroke="#171717" stroke-width="13.4" stroke-linecap="round" stroke-linejoin="round"/><path d="M-14 103L-30 104L-36 96" fill="none" stroke="#2f6fc0" stroke-width="10" stroke-linecap="round" stroke-linejoin="round"/><path d="M-8 6C-11 1-10-6-6-8C-3-10 5-10 8-7C11-4 11 3 8 7C5 10-4 10-8 6z" fill="#fcd3ad" stroke="#171717" stroke-width="1.5" stroke-linejoin="round" transform="translate(-33.5 83) rotate(-10) scale(1.1 1.1)"/><path d="M-3 -3.500L4-3.500M-3.500 0.500L4 0.500M-3 4.500L3.500 4.500" fill="none" stroke="#171717" stroke-width="1.3" stroke-linecap="round" transform="translate(-33.5 83) rotate(-10) scale(1.1 1.1)"/><path d="M-20 107.3C-20 97.5 -16 88.5 -6.5 83.5L15.5 83.5C25 88.5 29 97.5 29 107.3z" fill="#2f6fc0" stroke="#171717" stroke-width="2.1" stroke-linejoin="round"/><path d="M-10.5 99.5Q-11.5 99.3 -11.5 107.3" fill="none" stroke="#171717" stroke-width="1.5"/><path d="M19.5 99.5Q20.5 99.3 20.5 107.3" fill="none" stroke="#171717" stroke-width="1.5"/><path d="M-1.5 80.5L10.5 80.5L8.5 88.5L0.5 88.5z" fill="#f3ae88"/><path d="M1.3 88L7.7 88L8.3 94L9.5 107.3L-0.5 107.3L0.7 94z" fill="#1c1c1c" stroke="#171717" stroke-width="1.2" stroke-linejoin="round"/><path d="M0.9 94L8.1 94" fill="none" stroke="#3a3a3a" stroke-width="0.8"/><path d="M-5 83L4.2 88.3L-1 95.5L-8.5 87z" fill="#3b7dd0" stroke="#171717" stroke-width="1.5" stroke-linejoin="round"/><path d="M14 83L4.8 88.3L10 95.5L17.5 87z" fill="#3b7dd0" stroke="#171717" stroke-width="1.5" stroke-linejoin="round"/><path d="M-43.1 56.5a5.6 8.2 0 1 0 11.2 0a5.6 8.2 0 1 0 -11.2 0z" fill="#fcd3ad" stroke="#171717" stroke-width="2.1"/><path d="M-38.5 52.500Q-41.5 56.500 -37.5 61" fill="none" stroke="#f3ae88" stroke-width="1.6"/><path d="M31.9 56.5a5.6 8.2 0 1 0 11.2 0a5.6 8.2 0 1 0 -11.2 0z" fill="#fcd3ad" stroke="#171717" stroke-width="2.1"/><path d="M38.5 52.500Q41.5 56.500 37.5 61" fill="none" stroke="#f3ae88" stroke-width="1.6"/><path d="M-32.5 40C-34 58-31 71-18 79C-8 85.500 8 85.500 18 79C31 71 34 58 33 40C32 20-32 20-32.500 40z" fill="#fcd3ad" stroke="#171717" stroke-width="2.1"/><path d="M-30 44C-29 34-26 29-21 26.500C-12 24 12 24 25 25.500C29 30 31 36 31.500 44C30 36 28 31 24 28C12 26.500-10 26.500-20 29C-25 32-28 37-30 44z" fill="#f3ae88"/><path d="M-36 49C-42 34-41.500 13-24 4.500C-10-2 12-2.500 23 3C27 2.500 32 6 35 11C41 20 42 36 37.500 50L32 47C32.500 37 30.500 29.500 25.500 24.500C10 23-12 22.500-22 25.500C-27.500 30-31 38-32 47z" fill="#191919" stroke="#171717" stroke-width="1.5"/><path d="M-24.2 11.5a3.2 1.7 0 1 0 6.4 0a3.2 1.7 0 1 0 -6.4 0z" fill="#4a4a4a" transform="rotate(-28 -21 11.500)"/><path d="M22.500 3.500C24 8 22 12 18 15" fill="none" stroke="#000" stroke-width="1.2"/><path d="M-22 38.5Q-17 33.5 -11.5 38" fill="none" stroke="#171717" stroke-width="3" stroke-linecap="round"/><path d="M22 38.5Q17 33.5 11.5 38" fill="none" stroke="#171717" stroke-width="3" stroke-linecap="round"/><path d="M-19.7 53.8a3.7 5.6 0 1 0 7.4 0a3.7 5.6 0 1 0 -7.4 0z" fill="#111"/><path d="M-15.9 50.8a0.9 1.2 0 1 0 1.8 0a0.9 1.2 0 1 0 -1.8 0z" fill="#fff"/><path d="M12.3 53.8a3.7 5.6 0 1 0 7.4 0a3.7 5.6 0 1 0 -7.4 0z" fill="#111"/><path d="M16.1 50.8a0.9 1.2 0 1 0 1.8 0a0.9 1.2 0 1 0 -1.8 0z" fill="#fff"/><g fill="none" stroke="#141414" stroke-width="2" stroke-linecap="round"><rect x="-30.4" y="44.4" width="27.200" height="18.8" rx="6.500"/><path d="M-30.4 49.9L-33.8 49.4"/><rect x="3.2" y="44.4" width="27.200" height="18.8" rx="6.500"/><path d="M30.4 49.9L33.8 49.4"/><path d="M-3.200 51.2Q0 49 3.200 51.2"/></g><path d="M-1.5 60.6a1.5 1.5 0 1 0 3 0a1.5 1.5 0 1 0 -3 0z" fill="#2a1a14"/><path d="M-9.8 69Q0 71 9.8 69Q7.4 77.5 0 77.5Q-7.4 77.5 -9.8 69z" fill="#e9614d" stroke="#171717" stroke-width="2" stroke-linecap="round" stroke-linejoin="round"/><text x="-47" y="67" text-anchor="middle" font-family="Liberation Sans, sans-serif" font-weight="bold" font-style="italic" font-size="19" fill="#141414" stroke="#fffdf6" stroke-width="5.500" paint-order="stroke" stroke-linejoin="round" transform="rotate(14 -47 60)" textLength="25" lengthAdjust="spacingAndGlyphs">Yes</text></g><g transform="translate(181.9 263.9) scale(1 1)" stroke-linejoin="round"><g transform="translate(0.600 1.800)" fill="#eda94f" stroke="#eda94f" stroke-width="8.8" opacity="0.550"><path d="M16 96L36 90" fill="none" stroke-linecap="round" stroke-width="23.2"/><path d="M-8 10C-12.500 4-12.500-4-10.500-8C-10-11.500-6.500-12-5.500-9C-5-13.500-1-14 -0.500-10C0.500-14 4.500-13.500 4.500-9.500C6-12 9-11 8.500-7.500L8-1.500C10-5 13.500-6.500 14.500-4C15-1 11 3 9.500 6C8.500 9.500 5 11.500 1 11.500C-3 11.500-6 11-8 10z" transform="translate(47 88) rotate(100) scale(1 1)"/><path d="M-28 105.5C-28 97.5 -24 88.5 -13 83.5L9 83.5C20 88.5 24 97.5 24 105.5z"/><path d="M44 56L42.5 66L52 60.5z"/><path d="M40.5 47.7a16.5 14.5 0 1 0 33 0a16.5 14.5 0 1 0 -33 0z"/><path d="M-43.1 56.5a5.6 8.2 0 1 0 11.2 0a5.6 8.2 0 1 0 -11.2 0z"/><path d="M31.9 56.5a5.6 8.2 0 1 0 11.2 0a5.6 8.2 0 1 0 -11.2 0z"/><path d="M-32.5 40C-34 58-31 71-18 79C-8 85.500 8 85.500 18 79C31 71 34 58 33 40C32 20-32 20-32.500 40z"/><path d="M-36 49C-42 34-41.500 13-24 4.500C-10-2 12-2.500 23 3C27 2.500 32 6 35 11C41 20 42 36 37.500 50L32 47C32.500 37 30.500 29.500 25.500 24.500C10 23-12 22.500-22 25.500C-27.500 30-31 38-32 47z"/></g><g fill="#fffdf6" stroke="#fffdf6" stroke-width="8.2"><path d="M16 96L36 90" fill="none" stroke-linecap="round" stroke-width="22.6"/><path d="M-8 10C-12.500 4-12.500-4-10.500-8C-10-11.500-6.500-12-5.500-9C-5-13.500-1-14 -0.500-10C0.500-14 4.500-13.500 4.500-9.500C6-12 9-11 8.500-7.500L8-1.500C10-5 13.500-6.500 14.500-4C15-1 11 3 9.500 6C8.500 9.500 5 11.500 1 11.500C-3 11.500-6 11-8 10z" transform="translate(47 88) rotate(100) scale(1 1)"/><path d="M-28 105.5C-28 97.5 -24 88.5 -13 83.5L9 83.5C20 88.5 24 97.5 24 105.5z"/><path d="M44 56L42.5 66L52 60.5z"/><path d="M40.5 47.7a16.5 14.5 0 1 0 33 0a16.5 14.5 0 1 0 -33 0z"/><path d="M-43.1 56.5a5.6 8.2 0 1 0 11.2 0a5.6 8.2 0 1 0 -11.2 0z"/><path d="M31.9 56.5a5.6 8.2 0 1 0 11.2 0a5.6 8.2 0 1 0 -11.2 0z"/><path d="M-32.5 40C-34 58-31 71-18 79C-8 85.500 8 85.500 18 79C31 71 34 58 33 40C32 20-32 20-32.500 40z"/><path d="M-36 49C-42 34-41.500 13-24 4.500C-10-2 12-2.500 23 3C27 2.500 32 6 35 11C41 20 42 36 37.500 50L32 47C32.500 37 30.500 29.500 25.500 24.500C10 23-12 22.500-22 25.500C-27.500 30-31 38-32 47z"/></g><path d="M16 96L36 90" fill="none" stroke="#171717" stroke-width="14.4" stroke-linecap="round" stroke-linejoin="round"/><path d="M16 96L36 90" fill="none" stroke="#2f6fc0" stroke-width="11" stroke-linecap="round" stroke-linejoin="round"/><path d="M-8 10C-12.500 4-12.500-4-10.500-8C-10-11.500-6.500-12-5.500-9C-5-13.500-1-14 -0.500-10C0.500-14 4.500-13.500 4.500-9.500C6-12 9-11 8.500-7.500L8-1.500C10-5 13.500-6.500 14.500-4C15-1 11 3 9.500 6C8.500 9.500 5 11.500 1 11.500C-3 11.500-6 11-8 10z" fill="#fcd3ad" stroke="#171717" stroke-width="1.7" stroke-linejoin="round" transform="translate(47 88) rotate(100) scale(1 1)"/><path d="M-5.500-9L-5-3M-0.500-10L-0.300-3.500M4.500-9.500L4.200-3" fill="none" stroke="#171717" stroke-width="1.5" stroke-linecap="round" transform="translate(47 88) rotate(100) scale(1 1)"/><path d="M-28 105.5C-28 97.5 -24 88.5 -13 83.5L9 83.5C20 88.5 24 97.5 24 105.5z" fill="#2f6fc0" stroke="#171717" stroke-width="2.1" stroke-linejoin="round"/><path d="M-18.5 99.5Q-19.5 97.5 -19.5 105.5" fill="none" stroke="#171717" stroke-width="1.5"/><path d="M14.5 99.5Q15.5 97.5 15.5 105.5" fill="none" stroke="#171717" stroke-width="1.5"/><path d="M-8 80.5L4 80.5L2 88.5L-6 88.5z" fill="#f3ae88"/><path d="M-5.2 88L1.2 88L1.8 94L3 105.5L-7 105.5L-5.8 94z" fill="#1c1c1c" stroke="#171717" stroke-width="1.2" stroke-linejoin="round"/><path d="M-5.6 94L1.6 94" fill="none" stroke="#3a3a3a" stroke-width="0.8"/><path d="M-11.5 83L-2.3 88.3L-7.5 95.5L-15 87z" fill="#3b7dd0" stroke="#171717" stroke-width="1.5" stroke-linejoin="round"/><path d="M7.5 83L-1.7 88.3L3.5 95.5L11 87z" fill="#3b7dd0" stroke="#171717" stroke-width="1.5" stroke-linejoin="round"/><path d="M44 56L42.5 66L52 60.5z" fill="#fffdf8" stroke="#171717" stroke-width="1.6" stroke-linejoin="round"/><path d="M40.5 47.7a16.5 14.5 0 1 0 33 0a16.5 14.5 0 1 0 -33 0z" fill="#fffdf8" stroke="#171717" stroke-width="1.6"/><path d="M45 56.5L43.7 61.3L46.8 63L51 60L51.1 54.6z" fill="#fffdf8"/><text x="57" y="53.7" text-anchor="middle" font-family="Liberation Sans, sans-serif" font-weight="bold" font-size="17" fill="#141414">No</text><path d="M-43.1 56.5a5.6 8.2 0 1 0 11.2 0a5.6 8.2 0 1 0 -11.2 0z" fill="#fcd3ad" stroke="#171717" stroke-width="2.1"/><path d="M-38.5 52.500Q-41.5 56.500 -37.5 61" fill="none" stroke="#f3ae88" stroke-width="1.6"/><path d="M31.9 56.5a5.6 8.2 0 1 0 11.2 0a5.6 8.2 0 1 0 -11.2 0z" fill="#fcd3ad" stroke="#171717" stroke-width="2.1"/><path d="M38.5 52.500Q41.5 56.500 37.5 61" fill="none" stroke="#f3ae88" stroke-width="1.6"/><path d="M-32.5 40C-34 58-31 71-18 79C-8 85.500 8 85.500 18 79C31 71 34 58 33 40C32 20-32 20-32.500 40z" fill="#fcd3ad" stroke="#171717" stroke-width="2.1"/><path d="M-30 44C-29 34-26 29-21 26.500C-12 24 12 24 25 25.500C29 30 31 36 31.500 44C30 36 28 31 24 28C12 26.500-10 26.500-20 29C-25 32-28 37-30 44z" fill="#f3ae88"/><path d="M-36 49C-42 34-41.500 13-24 4.500C-10-2 12-2.500 23 3C27 2.500 32 6 35 11C41 20 42 36 37.500 50L32 47C32.500 37 30.500 29.500 25.500 24.500C10 23-12 22.500-22 25.500C-27.500 30-31 38-32 47z" fill="#191919" stroke="#171717" stroke-width="1.5"/><path d="M-24.2 11.5a3.2 1.7 0 1 0 6.4 0a3.2 1.7 0 1 0 -6.4 0z" fill="#4a4a4a" transform="rotate(-28 -21 11.500)"/><path d="M22.500 3.500C24 8 22 12 18 15" fill="none" stroke="#000" stroke-width="1.2"/><path d="M-23.5 34Q-17 35.5 -10.5 41" fill="none" stroke="#171717" stroke-width="2.6" stroke-linecap="round"/><path d="M23.5 34Q17 35.5 10.5 41" fill="none" stroke="#171717" stroke-width="2.6" stroke-linecap="round"/><path d="M-19.7 53.8a3.7 5.6 0 1 0 7.4 0a3.7 5.6 0 1 0 -7.4 0z" fill="#111"/><path d="M-15.9 50.8a0.9 1.2 0 1 0 1.8 0a0.9 1.2 0 1 0 -1.8 0z" fill="#fff"/><path d="M12.3 53.8a3.7 5.6 0 1 0 7.4 0a3.7 5.6 0 1 0 -7.4 0z" fill="#111"/><path d="M16.1 50.8a0.9 1.2 0 1 0 1.8 0a0.9 1.2 0 1 0 -1.8 0z" fill="#fff"/><g fill="none" stroke="#141414" stroke-width="2" stroke-linecap="round"><rect x="-30.4" y="44.4" width="27.200" height="18.8" rx="6.500"/><path d="M-30.4 49.9L-33.8 49.4"/><rect x="3.2" y="44.4" width="27.200" height="18.8" rx="6.500"/><path d="M30.4 49.9L33.8 49.4"/><path d="M-3.200 51.2Q0 49 3.200 51.2"/></g><path d="M-1.5 60.6a1.5 1.5 0 1 0 3 0a1.5 1.5 0 1 0 -3 0z" fill="#2a1a14"/><path d="M-6.5 73.5a6.5 4.6 0 1 0 13 0a6.5 4.6 0 1 0 -13 0z" fill="#e9614d" stroke="#171717" stroke-width="1.8"/></g><g transform="translate(315.2 263.9) scale(1 1)" stroke-linejoin="round"><g transform="translate(0.600 1.800)" fill="#eda94f" stroke="#eda94f" stroke-width="8.8" opacity="0.550"><path d="M-23 105.5C-23 97.5 -19 88.5 -7 83.5L15 83.5C27 88.5 31 97.5 31 105.5z"/><path d="M-43.1 56.5a5.6 8.2 0 1 0 11.2 0a5.6 8.2 0 1 0 -11.2 0z"/><path d="M31.9 56.5a5.6 8.2 0 1 0 11.2 0a5.6 8.2 0 1 0 -11.2 0z"/><path d="M-32.5 40C-34 58-31 71-18 79C-8 85.500 8 85.500 18 79C31 71 34 58 33 40C32 20-32 20-32.500 40z"/><path d="M-36 49C-42 34-41.500 13-24 4.500C-10-2 12-2.500 23 3C27 2.500 32 6 35 11C41 20 42 36 37.500 50L32 47C32.500 37 30.500 29.500 25.500 24.500C10 23-12 22.500-22 25.500C-27.500 30-31 38-32 47z"/></g><g fill="#fffdf6" stroke="#fffdf6" stroke-width="8.2"><path d="M-23 105.5C-23 97.5 -19 88.5 -7 83.5L15 83.5C27 88.5 31 97.5 31 105.5z"/><path d="M-43.1 56.5a5.6 8.2 0 1 0 11.2 0a5.6 8.2 0 1 0 -11.2 0z"/><path d="M31.9 56.5a5.6 8.2 0 1 0 11.2 0a5.6 8.2 0 1 0 -11.2 0z"/><path d="M-32.5 40C-34 58-31 71-18 79C-8 85.500 8 85.500 18 79C31 71 34 58 33 40C32 20-32 20-32.500 40z"/><path d="M-36 49C-42 34-41.500 13-24 4.500C-10-2 12-2.500 23 3C27 2.500 32 6 35 11C41 20 42 36 37.500 50L32 47C32.500 37 30.500 29.500 25.500 24.500C10 23-12 22.500-22 25.500C-27.500 30-31 38-32 47z"/></g><path d="M-23 105.5C-23 97.5 -19 88.5 -7 83.5L15 83.5C27 88.5 31 97.5 31 105.5z" fill="#2f6fc0" stroke="#171717" stroke-width="2.1" stroke-linejoin="round"/><path d="M-13.5 99.5Q-14.5 97.5 -14.5 105.5" fill="none" stroke="#171717" stroke-width="1.5"/><path d="M21.5 99.5Q22.5 97.5 22.5 105.5" fill="none" stroke="#171717" stroke-width="1.5"/><path d="M-2 80.5L10 80.5L8 88.5L0 88.5z" fill="#f3ae88"/><path d="M0.8 88L7.2 88L7.8 94L9 105.5L-1 105.5L0.2 94z" fill="#1c1c1c" stroke="#171717" stroke-width="1.2" stroke-linejoin="round"/><path d="M0.4 94L7.6 94" fill="none" stroke="#3a3a3a" stroke-width="0.8"/><path d="M-5.5 83L3.7 88.3L-1.5 95.5L-9 87z" fill="#3b7dd0" stroke="#171717" stroke-width="1.5" stroke-linejoin="round"/><path d="M13.5 83L4.3 88.3L9.5 95.5L17 87z" fill="#3b7dd0" stroke="#171717" stroke-width="1.5" stroke-linejoin="round"/><path d="M-43.1 56.5a5.6 8.2 0 1 0 11.2 0a5.6 8.2 0 1 0 -11.2 0z" fill="#fcd3ad" stroke="#171717" stroke-width="2.1"/><path d="M-38.5 52.500Q-41.5 56.500 -37.5 61" fill="none" stroke="#f3ae88" stroke-width="1.6"/><path d="M31.9 56.5a5.6 8.2 0 1 0 11.2 0a5.6 8.2 0 1 0 -11.2 0z" fill="#fcd3ad" stroke="#171717" stroke-width="2.1"/><path d="M38.5 52.500Q41.5 56.500 37.5 61" fill="none" stroke="#f3ae88" stroke-width="1.6"/><path d="M-32.5 40C-34 58-31 71-18 79C-8 85.500 8 85.500 18 79C31 71 34 58 33 40C32 20-32 20-32.500 40z" fill="#fcd3ad" stroke="#171717" stroke-width="2.1"/><path d="M-30 44C-29 34-26 29-21 26.500C-12 24 12 24 25 25.500C29 30 31 36 31.500 44C30 36 28 31 24 28C12 26.500-10 26.500-20 29C-25 32-28 37-30 44z" fill="#f3ae88"/><path d="M-36 49C-42 34-41.500 13-24 4.500C-10-2 12-2.500 23 3C27 2.500 32 6 35 11C41 20 42 36 37.500 50L32 47C32.500 37 30.500 29.500 25.500 24.500C10 23-12 22.500-22 25.500C-27.500 30-31 38-32 47z" fill="#191919" stroke="#171717" stroke-width="1.5"/><path d="M-24.2 11.5a3.2 1.7 0 1 0 6.4 0a3.2 1.7 0 1 0 -6.4 0z" fill="#4a4a4a" transform="rotate(-28 -21 11.500)"/><path d="M22.500 3.500C24 8 22 12 18 15" fill="none" stroke="#000" stroke-width="1.2"/><path d="M-24 42Q-18 36 -11 35.5" fill="none" stroke="#171717" stroke-width="2.5" stroke-linecap="round"/><path d="M24 42Q18 36 11 35.5" fill="none" stroke="#171717" stroke-width="2.5" stroke-linecap="round"/><path d="M-21.5 53Q-16 59 -10.5 53" fill="none" stroke="#171717" stroke-width="2.2" stroke-linecap="round"/><path d="M10.5 53Q16 59 21.5 53" fill="none" stroke="#171717" stroke-width="2.2" stroke-linecap="round"/><g fill="none" stroke="#141414" stroke-width="2" stroke-linecap="round"><rect x="-30.4" y="44.4" width="27.200" height="18.8" rx="6.500"/><path d="M-30.4 49.9L-33.8 49.4"/><rect x="3.2" y="44.4" width="27.200" height="18.8" rx="6.500"/><path d="M30.4 49.9L33.8 49.4"/><path d="M-3.200 51.2Q0 49 3.200 51.2"/></g><path d="M-1.5 60.6a1.5 1.5 0 1 0 3 0a1.5 1.5 0 1 0 -3 0z" fill="#2a1a14"/><path d="M-7 77.5Q0 69.5 7 77.5" fill="none" stroke="#171717" stroke-width="2.1" stroke-linecap="round" stroke-linejoin="round"/><path d="M-46 4C-56-1-62 7-54 11C-44 15-41 6-50 7C-60 9-58 17-50 19C-42 20-43 14-48 16C-53 18-50 24-43 27" fill="none" stroke="#fffdf6" stroke-width="7" stroke-linecap="round"/><path d="M-46 4C-56-1-62 7-54 11C-44 15-41 6-50 7C-60 9-58 17-50 19C-42 20-43 14-48 16C-53 18-50 24-43 27" fill="none" stroke="#171717" stroke-width="2" stroke-linecap="round"/></g></svg>

  </div>
  <div class="btn" id="b1" style="top:465px;border:1px solid #d4d6de;background:#fff;color:#454a66;line-height:38px;font-size:14px;letter-spacing:0.1px">Thêm ảnh vào thiết kế</div>
  <div class="btn grad" style="top:517px"></div>
  <div class="abs sb" id="b2" style="left:164px;top:529.500px;font-size:13.500px;color:#fff;white-space:nowrap">Tạo lại</div>
  <div class="abs" style="left:214px;top:525px;width:52.500px;height:23.500px;border-radius:12px;background:rgba(12,80,120,0.55)"></div>
  <div class="abs" id="b2n" style="left:224px;top:529.500px;font-size:13.500px;color:#fff">10</div>
  <svg class="abs" style="left:243.500px;top:530px" width="13" height="13" viewBox="0 0 24 24"><path d="M12 2l3.100 6.500 7.100 1-5.200 5 1.300 7.100L12 18.200l-6.300 3.400 1.300-7.100-5.200-5 7.100-1z" fill="#fbb829" stroke="#fbb829" stroke-width="2.500" stroke-linejoin="round"/></svg>
  <div class="btn grad" style="top:565px"></div>
  <div class="abs sb" id="b3" style="left:177px;top:577.500px;font-size:13.500px;color:#fff;white-space:nowrap">Tạo ảnh mới</div>
  <div class="abs" style="left:427px;top:365.500px;width:16px;height:81px;background:#fff;border:1px solid #d0d2d8;border-left:none;border-radius:0 14px 14px 0;z-index:5"></div>
  <div class="abs" style="left:430px;top:397px;width:1.500px;height:18px;background:#dfe1ea;z-index:6"></div>
  <div class="abs" style="left:435px;top:397px;width:1.500px;height:18px;background:#dfe1ea;z-index:6"></div>
</div>

<div id="work">
  <!-- page -->
  <div class="abs" style="left:199px;top:55px;width:433px;height:641px;background:#fff;box-shadow:0 0 2px rgba(0,0,0,0.08)"></div>
  <div class="abs" id="addp" style="left:199px;top:716px;width:433px;height:43px;background:#dfe2ea;border-radius:2px;text-align:center;line-height:44px;font-size:15.500px;color:#454a66;letter-spacing:0.3px;-webkit-text-stroke:0.2px #454a66">+ Thêm trang</div>
<svg class="abs" style="left:0;top:0" width="843" height="771" viewBox="503 56 843 771"><g transform="translate(1014.6 135.5) scale(0.84 0.955)" stroke-linejoin="round"><path d="M-36 121.5C-36 97.5 -32 88.5 -11 83.5L11 83.5C32 88.5 36 97.5 36 121.5z" fill="#2e6bb0" stroke="#171717" stroke-width="2.1" stroke-linejoin="round"/><path d="M-26.5 99.5Q-27.5 113.5 -27.5 121.5" fill="none" stroke="#171717" stroke-width="1.5"/><path d="M26.5 99.5Q27.5 113.5 27.5 121.5" fill="none" stroke="#171717" stroke-width="1.5"/><path d="M-6 80.5L6 80.5L4 88.5L-4 88.5z" fill="#f3ae88"/><path d="M-3.2 88L3.2 88L3.8 94L5 121.5L-5 121.5L-3.8 94z" fill="#1c1c1c" stroke="#171717" stroke-width="1.2" stroke-linejoin="round"/><path d="M-3.6 94L3.6 94" fill="none" stroke="#3a3a3a" stroke-width="0.8"/><path d="M-9.5 83L-0.3 88.3L-5.5 95.5L-13 87z" fill="#3776bb" stroke="#171717" stroke-width="1.5" stroke-linejoin="round"/><path d="M9.5 83L0.3 88.3L5.5 95.5L13 87z" fill="#3776bb" stroke="#171717" stroke-width="1.5" stroke-linejoin="round"/><path d="M50 40L47.5 52L60 45.5z" fill="#fffdf8" stroke="#171717" stroke-width="1.6" stroke-linejoin="round"/><path d="M42.5 29.7a23 17.4 0 1 0 46 0a23 17.4 0 1 0 -46 0z" fill="#fffdf8" stroke="#171717" stroke-width="1.6"/><path d="M51 40.5L49.2 46.3L53.3 48.5L59 45L58.7 38.2z" fill="#fffdf8"/><text x="65.5" y="36" text-anchor="middle" font-family="Liberation Sans, sans-serif" font-weight="bold" font-size="18" fill="#141414" textLength="34" lengthAdjust="spacingAndGlyphs">Hello</text><path d="M-43.1 56.5a5.6 8.2 0 1 0 11.2 0a5.6 8.2 0 1 0 -11.2 0z" fill="#fcd3ad" stroke="#171717" stroke-width="2.1"/><path d="M-38.5 52.500Q-41.5 56.500 -37.5 61" fill="none" stroke="#f3ae88" stroke-width="1.6"/><path d="M31.9 56.5a5.6 8.2 0 1 0 11.2 0a5.6 8.2 0 1 0 -11.2 0z" fill="#fcd3ad" stroke="#171717" stroke-width="2.1"/><path d="M38.5 52.500Q41.5 56.500 37.5 61" fill="none" stroke="#f3ae88" stroke-width="1.6"/><path d="M-32.5 40C-34 58-31 71-18 79C-8 85.500 8 85.500 18 79C31 71 34 58 33 40C32 20-32 20-32.500 40z" fill="#fcd3ad" stroke="#171717" stroke-width="2.1"/><path d="M-30 44C-29 34-26 29-21 26.500C-12 24 12 24 25 25.500C29 30 31 36 31.500 44C30 36 28 31 24 28C12 26.500-10 26.500-20 29C-25 32-28 37-30 44z" fill="#f3ae88"/><path d="M-36 49C-42 34-41.500 13-24 4.500C-10-2 12-2.500 23 3C27 2.500 32 6 35 11C41 20 42 36 37.500 50L32 47C32.500 37 30.500 29.500 25.500 24.500C10 23-12 22.500-22 25.500C-27.500 30-31 38-32 47z" fill="#191919" stroke="#171717" stroke-width="1.5"/><path d="M-24.2 11.5a3.2 1.7 0 1 0 6.4 0a3.2 1.7 0 1 0 -6.4 0z" fill="#4a4a4a" transform="rotate(-28 -21 11.500)"/><path d="M22.500 3.500C24 8 22 12 18 15" fill="none" stroke="#000" stroke-width="1.2"/><path d="M-22 38.5Q-17 33.5 -11.5 38" fill="none" stroke="#171717" stroke-width="3" stroke-linecap="round"/><path d="M22 38.5Q17 33.5 11.5 38" fill="none" stroke="#171717" stroke-width="3" stroke-linecap="round"/><path d="M-19.7 53.8a3.7 5.6 0 1 0 7.4 0a3.7 5.6 0 1 0 -7.4 0z" fill="#111"/><path d="M-15.9 50.8a0.9 1.2 0 1 0 1.8 0a0.9 1.2 0 1 0 -1.8 0z" fill="#fff"/><path d="M12.3 53.8a3.7 5.6 0 1 0 7.4 0a3.7 5.6 0 1 0 -7.4 0z" fill="#111"/><path d="M16.1 50.8a0.9 1.2 0 1 0 1.8 0a0.9 1.2 0 1 0 -1.8 0z" fill="#fff"/><g fill="none" stroke="#333" stroke-width="1.6" stroke-linecap="round"><rect x="-30.4" y="44.4" width="27.200" height="18.8" rx="6.500"/><path d="M-30.4 49.9L-33.8 49.4"/><rect x="3.2" y="44.4" width="27.200" height="18.8" rx="6.500"/><path d="M30.4 49.9L33.8 49.4"/><path d="M-3.200 51.2Q0 49 3.200 51.2"/></g><path d="M-1.6 60.6a1.6 1.6 0 1 0 3.2 0a1.6 1.6 0 1 0 -3.2 0z" fill="#e8744c"/><path d="M-12.1 65Q0 67.5 12.1 65Q9.7 76.5 0 76.5Q-9.7 76.5 -12.1 65z" fill="#7d1f1f" stroke="#171717" stroke-width="2" stroke-linecap="round" stroke-linejoin="round"/><path d="M-6.6 74.2Q0 69.8 6.6 74.2Q0 77.9 -6.6 74.2z" fill="#f2705e"/></g><g transform="translate(982.6 279.5) scale(0.82 0.88)" stroke-linejoin="round"><path d="M-33 124C-38 110-34 92-13 84L13 84C34 92 38 110 33 124C20 127-20 127-33 124z" fill="#2e6bb0" stroke="#171717" stroke-width="2.1"/><path d="M-6 79L6 79L4 87L-4 87z" fill="#f3ae88"/><path d="M-3.2 86.5L3.2 86.5L3.8 92.5L5 104L-5 104L-3.8 92.5z" fill="#1c1c1c" stroke="#171717" stroke-width="1.2" stroke-linejoin="round"/><path d="M-3.6 92.5L3.6 92.5" fill="none" stroke="#3a3a3a" stroke-width="0.8"/><path d="M-9.5 81.5L-0.3 86.8L-5.5 94L-13 85.5z" fill="#3776bb" stroke="#171717" stroke-width="1.5" stroke-linejoin="round"/><path d="M9.5 81.5L0.3 86.8L5.5 94L13 85.5z" fill="#3776bb" stroke="#171717" stroke-width="1.5" stroke-linejoin="round"/><path d="M-31 104C-16 98 6 104 18 115" fill="none" stroke="#171717" stroke-width="1.8"/><path d="M31 104C16 98-6 104-18 115" fill="none" stroke="#171717" stroke-width="1.8"/><path d="M-24 103.5a7 4.2 0 1 0 14 0a7 4.2 0 1 0 -14 0z" fill="#fcd3ad" stroke="#171717" stroke-width="1.6" transform="rotate(25 -17 103.500)"/><path d="M12 103a7 4.2 0 1 0 14 0a7 4.2 0 1 0 -14 0z" fill="#fcd3ad" stroke="#171717" stroke-width="1.6" transform="rotate(-25 19 103)"/><path d="M53 45L51.5 56L63 50z" fill="#fffdf8" stroke="#171717" stroke-width="1.6" stroke-linejoin="round"/><path d="M45.3 33.5a20.7 18.5 0 1 0 41.4 0a20.7 18.5 0 1 0 -41.4 0z" fill="#fffdf8" stroke="#171717" stroke-width="1.6"/><path d="M54 45.5L52.7 50.7L56.8 52.8L62 49.5L60.8 42.6z" fill="#fffdf8"/><text x="66" y="40.9" text-anchor="middle" font-family="Liberation Sans, sans-serif" font-weight="bold" font-size="21" fill="#141414">No</text><path d="M-43.1 56.5a5.6 8.2 0 1 0 11.2 0a5.6 8.2 0 1 0 -11.2 0z" fill="#fcd3ad" stroke="#171717" stroke-width="2.1"/><path d="M-38.5 52.500Q-41.5 56.500 -37.5 61" fill="none" stroke="#f3ae88" stroke-width="1.6"/><path d="M31.9 56.5a5.6 8.2 0 1 0 11.2 0a5.6 8.2 0 1 0 -11.2 0z" fill="#fcd3ad" stroke="#171717" stroke-width="2.1"/><path d="M38.5 52.500Q41.5 56.500 37.5 61" fill="none" stroke="#f3ae88" stroke-width="1.6"/><path d="M-32.5 40C-34 58-31 71-18 79C-8 85.500 8 85.500 18 79C31 71 34 58 33 40C32 20-32 20-32.500 40z" fill="#fcd3ad" stroke="#171717" stroke-width="2.1"/><path d="M-30 44C-29 34-26 29-21 26.500C-12 24 12 24 25 25.500C29 30 31 36 31.500 44C30 36 28 31 24 28C12 26.500-10 26.500-20 29C-25 32-28 37-30 44z" fill="#f3ae88"/><path d="M-36 49C-42 34-41.500 13-24 4.500C-10-2 12-2.500 23 3C27 2.500 32 6 35 11C41 20 42 36 37.500 50L32 47C32.500 37 30.500 29.500 25.500 24.500C10 23-12 22.500-22 25.500C-27.500 30-31 38-32 47z" fill="#191919" stroke="#171717" stroke-width="1.5"/><path d="M-24.2 11.5a3.2 1.7 0 1 0 6.4 0a3.2 1.7 0 1 0 -6.4 0z" fill="#4a4a4a" transform="rotate(-28 -21 11.500)"/><path d="M22.500 3.500C24 8 22 12 18 15" fill="none" stroke="#000" stroke-width="1.2"/><path d="M-23 42.5Q-17 39 -11 41" fill="none" stroke="#171717" stroke-width="2.5" stroke-linecap="round"/><path d="M23 42.5Q17 39 11 41" fill="none" stroke="#171717" stroke-width="2.5" stroke-linecap="round"/><path d="M-23 54Q-16 61.5 -9 54" fill="none" stroke="#171717" stroke-width="2.8" stroke-linecap="round"/><path d="M9 54Q16 61.5 23 54" fill="none" stroke="#171717" stroke-width="2.8" stroke-linecap="round"/><path d="M-1.6 60.6a1.6 1.6 0 1 0 3.2 0a1.6 1.6 0 1 0 -3.2 0z" fill="#e8744c"/><path d="M-7 75.5Q0 67.5 7 75.5" fill="none" stroke="#171717" stroke-width="2.1" stroke-linecap="round" stroke-linejoin="round"/></g><g transform="translate(884.5 511.7) scale(0.925 0.995)" stroke-linejoin="round"><path d="M-37 122.5C-37 97.5 -33 88.5 -13 83.5L9 83.5C29 88.5 33 97.5 33 122.5z" fill="#2e6bb0" stroke="#171717" stroke-width="2.1" stroke-linejoin="round"/><path d="M-27.5 99.5Q-28.5 114.5 -28.5 122.5" fill="none" stroke="#171717" stroke-width="1.5"/><path d="M23.5 99.5Q24.5 114.5 24.5 122.5" fill="none" stroke="#171717" stroke-width="1.5"/><path d="M-8 80.5L4 80.5L2 88.5L-6 88.5z" fill="#f3ae88"/><path d="M-5.2 88L1.2 88L1.8 94L3 122.5L-7 122.5L-5.8 94z" fill="#1c1c1c" stroke="#171717" stroke-width="1.2" stroke-linejoin="round"/><path d="M-5.6 94L1.6 94" fill="none" stroke="#3a3a3a" stroke-width="0.8"/><path d="M-11.5 83L-2.3 88.3L-7.5 95.5L-15 87z" fill="#3776bb" stroke="#171717" stroke-width="1.5" stroke-linejoin="round"/><path d="M7.5 83L-1.7 88.3L3.5 95.5L11 87z" fill="#3776bb" stroke="#171717" stroke-width="1.5" stroke-linejoin="round"/><path d="M26 104L40 98" fill="none" stroke="#171717" stroke-width="15.4" stroke-linecap="round" stroke-linejoin="round"/><path d="M26 104L40 98" fill="none" stroke="#2e6bb0" stroke-width="12" stroke-linecap="round" stroke-linejoin="round"/><path d="M-8 7C-11 2-10-3-7-5L-5-5.500C-5-9-4.500-13-2.500-15C-0.500-16.500 2-15 1.800-12L1.500-6L6-6C9.500-6 10.500-3 9-1.500C11 0 10.500 3 8.500 3.500C10 5.500 9 8 7 8.200C7.500 10.500 5.500 11.500 3 11.500L-2 11.500C-5 11.500-6.500 9.500-8 7z" fill="#fcd3ad" stroke="#171717" stroke-width="1.3" stroke-linejoin="round" transform="translate(41 80) rotate(8) scale(1.4 1.4)"/><path d="M1.500-6L1-2M3-1.500L9-1.500M3 3.500L8.500 3.500M3 8.200L7 8.200" fill="none" stroke="#171717" stroke-width="1.1" stroke-linecap="round" transform="translate(41 80) rotate(8) scale(1.4 1.4)"/><path d="M-43.1 56.5a5.6 8.2 0 1 0 11.2 0a5.6 8.2 0 1 0 -11.2 0z" fill="#fcd3ad" stroke="#171717" stroke-width="2.1"/><path d="M-38.5 52.500Q-41.5 56.500 -37.5 61" fill="none" stroke="#f3ae88" stroke-width="1.6"/><path d="M31.9 56.5a5.6 8.2 0 1 0 11.2 0a5.6 8.2 0 1 0 -11.2 0z" fill="#fcd3ad" stroke="#171717" stroke-width="2.1"/><path d="M38.5 52.500Q41.5 56.500 37.5 61" fill="none" stroke="#f3ae88" stroke-width="1.6"/><path d="M-32.5 40C-34 58-31 71-18 79C-8 85.500 8 85.500 18 79C31 71 34 58 33 40C32 20-32 20-32.500 40z" fill="#fcd3ad" stroke="#171717" stroke-width="2.1"/><path d="M-30 44C-29 34-26 29-21 26.500C-12 24 12 24 25 25.500C29 30 31 36 31.500 44C30 36 28 31 24 28C12 26.500-10 26.500-20 29C-25 32-28 37-30 44z" fill="#f3ae88"/><path d="M-36 49C-42 34-41.500 13-24 4.500C-10-2 12-2.500 23 3C27 2.500 32 6 35 11C41 20 42 36 37.500 50L32 47C32.500 37 30.500 29.500 25.500 24.500C10 23-12 22.500-22 25.500C-27.500 30-31 38-32 47z" fill="#191919" stroke="#171717" stroke-width="1.5"/><path d="M-24.2 11.5a3.2 1.7 0 1 0 6.4 0a3.2 1.7 0 1 0 -6.4 0z" fill="#4a4a4a" transform="rotate(-28 -21 11.500)"/><path d="M22.500 3.500C24 8 22 12 18 15" fill="none" stroke="#000" stroke-width="1.2"/><path d="M-22 38.5Q-17 33.5 -11.5 38" fill="none" stroke="#171717" stroke-width="3" stroke-linecap="round"/><path d="M22 38.5Q17 33.5 11.5 38" fill="none" stroke="#171717" stroke-width="3" stroke-linecap="round"/><path d="M-21.5 56.5Q-16 45.5 -10.5 56.5" fill="none" stroke="#171717" stroke-width="2.6" stroke-linecap="round"/><path d="M10.5 56.5Q16 45.5 21.5 56.5" fill="none" stroke="#171717" stroke-width="2.6" stroke-linecap="round"/><g fill="none" stroke="#333" stroke-width="1.6" stroke-linecap="round"><rect x="-30.4" y="44.4" width="27.200" height="18.8" rx="6.500"/><path d="M-30.4 49.9L-33.8 49.4"/><rect x="3.2" y="44.4" width="27.200" height="18.8" rx="6.500"/><path d="M30.4 49.9L33.8 49.4"/><path d="M-3.200 51.2Q0 49 3.200 51.2"/></g><path d="M-1.6 60.6a1.6 1.6 0 1 0 3.2 0a1.6 1.6 0 1 0 -3.2 0z" fill="#e8744c"/><path d="M-12.6 65Q0 67.5 12.6 65Q10.1 77 0 77Q-10.1 77 -12.6 65z" fill="#7d1f1f" stroke="#171717" stroke-width="2" stroke-linecap="round" stroke-linejoin="round"/><path d="M-6.9 74.6Q0 70 6.9 74.6Q0 78.4 -6.9 74.6z" fill="#f2705e"/><path d="M51 36C52.500 42.500 54 44 60 45.500C54 47 52.500 48.500 51 55C49.500 48.500 48 47 42 45.500C48 44 49.500 42.500 51 36z" fill="#f9a825"/></g><g transform="translate(1019.5 598.8) rotate(3) scale(1 1.095)" stroke-linejoin="round"><path d="M-38 121C-38 97.5 -34 88.5 -12 83.5L10 83.5C32 88.5 36 97.5 36 121z" fill="#2e6bb0" stroke="#171717" stroke-width="2.1" stroke-linejoin="round"/><path d="M-28.5 99.5Q-29.5 113 -29.5 121" fill="none" stroke="#171717" stroke-width="1.5"/><path d="M26.5 99.5Q27.5 113 27.5 121" fill="none" stroke="#171717" stroke-width="1.5"/><path d="M-7 80.5L5 80.5L3 88.5L-5 88.5z" fill="#f3ae88"/><path d="M-4.2 88L2.2 88L2.8 94L4 121L-6 121L-4.8 94z" fill="#1c1c1c" stroke="#171717" stroke-width="1.2" stroke-linejoin="round"/><path d="M-4.6 94L2.6 94" fill="none" stroke="#3a3a3a" stroke-width="0.8"/><path d="M-10.5 83L-1.3 88.3L-6.5 95.5L-14 87z" fill="#3776bb" stroke="#171717" stroke-width="1.5" stroke-linejoin="round"/><path d="M8.5 83L-0.7 88.3L4.5 95.5L12 87z" fill="#3776bb" stroke="#171717" stroke-width="1.5" stroke-linejoin="round"/><path d="M52 45L50 56.5L62 50z" fill="#fffdf8" stroke="#171717" stroke-width="1.6" stroke-linejoin="round"/><path d="M45.7 35a20.3 17 0 1 0 40.6 0a20.3 17 0 1 0 -40.6 0z" fill="#fffdf8" stroke="#171717" stroke-width="1.6"/><path d="M53 45.5L51.5 51L55.5 53L61 49.5L60.1 43.1z" fill="#fffdf8"/><text x="66" y="40.6" text-anchor="middle" font-family="Liberation Sans, sans-serif" font-weight="bold" font-size="16" fill="#141414" textLength="30" lengthAdjust="spacingAndGlyphs" transform="rotate(4 66 35)">Haha</text><path d="M-43.1 56.5a5.6 8.2 0 1 0 11.2 0a5.6 8.2 0 1 0 -11.2 0z" fill="#fcd3ad" stroke="#171717" stroke-width="2.1"/><path d="M-38.5 52.500Q-41.5 56.500 -37.5 61" fill="none" stroke="#f3ae88" stroke-width="1.6"/><path d="M31.9 56.5a5.6 8.2 0 1 0 11.2 0a5.6 8.2 0 1 0 -11.2 0z" fill="#fcd3ad" stroke="#171717" stroke-width="2.1"/><path d="M38.5 52.500Q41.5 56.500 37.5 61" fill="none" stroke="#f3ae88" stroke-width="1.6"/><path d="M-32.5 40C-34 58-31 71-18 79C-8 85.500 8 85.500 18 79C31 71 34 58 33 40C32 20-32 20-32.500 40z" fill="#fcd3ad" stroke="#171717" stroke-width="2.1"/><path d="M-30 44C-29 34-26 29-21 26.500C-12 24 12 24 25 25.500C29 30 31 36 31.500 44C30 36 28 31 24 28C12 26.500-10 26.500-20 29C-25 32-28 37-30 44z" fill="#f3ae88"/><path d="M-36 49C-42 34-41.500 13-24 4.500C-10-2 12-2.500 23 3C27 2.500 32 6 35 11C41 20 42 36 37.500 50L32 47C32.500 37 30.500 29.500 25.500 24.500C10 23-12 22.500-22 25.500C-27.500 30-31 38-32 47z" fill="#191919" stroke="#171717" stroke-width="1.5"/><path d="M-24.2 11.5a3.2 1.7 0 1 0 6.4 0a3.2 1.7 0 1 0 -6.4 0z" fill="#4a4a4a" transform="rotate(-28 -21 11.500)"/><path d="M22.500 3.500C24 8 22 12 18 15" fill="none" stroke="#000" stroke-width="1.2"/><path d="M-22 38.5Q-17 33.5 -11.5 38" fill="none" stroke="#171717" stroke-width="3" stroke-linecap="round"/><path d="M22 38.5Q17 33.5 11.5 38" fill="none" stroke="#171717" stroke-width="3" stroke-linecap="round"/><path d="M-21.5 56.5Q-16 45.5 -10.5 56.5" fill="none" stroke="#171717" stroke-width="2.6" stroke-linecap="round"/><path d="M10.5 56.5Q16 45.5 21.5 56.5" fill="none" stroke="#171717" stroke-width="2.6" stroke-linecap="round"/><g fill="none" stroke="#333" stroke-width="1.6" stroke-linecap="round"><rect x="-30.4" y="44.4" width="27.200" height="18.8" rx="6.500"/><path d="M-30.4 49.9L-33.8 49.4"/><rect x="3.2" y="44.4" width="27.200" height="18.8" rx="6.500"/><path d="M30.4 49.9L33.8 49.4"/><path d="M-3.200 51.2Q0 49 3.200 51.2"/></g><path d="M-1.6 60.6a1.6 1.6 0 1 0 3.2 0a1.6 1.6 0 1 0 -3.2 0z" fill="#e8744c"/><path d="M-13.7 64Q0 66.5 13.7 64Q10.9 77 0 77Q-10.9 77 -13.7 64z" fill="#7d1f1f" stroke="#171717" stroke-width="2" stroke-linecap="round" stroke-linejoin="round"/><path d="M-7.5 74.4Q0 69.5 7.5 74.4Q0 78.6 -7.5 74.4z" fill="#f2705e"/></g><g transform="translate(772.3 268.5) rotate(-8.9) scale(0.893 1.04)" stroke-linejoin="round"><path d="M-36 124C-36 97.5 -32 88.5 -14 83.5L8 83.5C26 88.5 30 97.5 30 124z" fill="#2e6bb0" stroke="#171717" stroke-width="2.1" stroke-linejoin="round"/><path d="M-26.5 99.5Q-27.5 116 -27.5 124" fill="none" stroke="#171717" stroke-width="1.5"/><path d="M20.5 99.5Q21.5 116 21.5 124" fill="none" stroke="#171717" stroke-width="1.5"/><path d="M-9 80.5L3 80.5L1 88.5L-7 88.5z" fill="#f3ae88"/><path d="M-6.2 88L0.2 88L0.8 94L2 124L-8 124L-6.8 94z" fill="#1c1c1c" stroke="#171717" stroke-width="1.2" stroke-linejoin="round"/><path d="M-6.6 94L0.6 94" fill="none" stroke="#3a3a3a" stroke-width="0.8"/><path d="M-12.5 83L-3.3 88.3L-8.5 95.5L-16 87z" fill="#3776bb" stroke="#171717" stroke-width="1.5" stroke-linejoin="round"/><path d="M6.5 83L-2.7 88.3L2.5 95.5L10 87z" fill="#3776bb" stroke="#171717" stroke-width="1.5" stroke-linejoin="round"/><path d="M24 101Q36 112 50 106" fill="none" stroke="#171717" stroke-width="15.4" stroke-linecap="round" stroke-linejoin="round"/><path d="M24 101Q36 112 50 106" fill="none" stroke="#2e6bb0" stroke-width="12" stroke-linecap="round" stroke-linejoin="round"/><path d="M-8 10C-12.500 4-12.500-4-10.500-8C-10-11.500-6.500-12-5.500-9C-5-13.500-1-14 -0.500-10C0.500-14 4.500-13.500 4.500-9.500C6-12 9-11 8.500-7.500L8-1.500C10-5 13.500-6.500 14.500-4C15-1 11 3 9.500 6C8.500 9.500 5 11.500 1 11.500C-3 11.500-6 11-8 10z" fill="#fcd3ad" stroke="#171717" stroke-width="1.5" stroke-linejoin="round" transform="translate(62 99) rotate(52) scale(1.1 1.1)"/><path d="M-5.500-9L-5-3M-0.500-10L-0.300-3.500M4.500-9.500L4.200-3" fill="none" stroke="#171717" stroke-width="1.3" stroke-linecap="round" transform="translate(62 99) rotate(52) scale(1.1 1.1)"/><path d="M56 49L55.6 59.5L66 53.5z" fill="#fffdf8" stroke="#171717" stroke-width="1.6" stroke-linejoin="round"/><path d="M46 38.8a20.8 15.3 0 1 0 41.6 0a20.8 15.3 0 1 0 -41.6 0z" fill="#fffdf8" stroke="#171717" stroke-width="1.6"/><path d="M57 49.5L56.3 54.5L60.3 56.3L65 53L63 46.9z" fill="#fffdf8"/><text x="66.8" y="44.2" text-anchor="middle" font-family="Liberation Sans, sans-serif" font-weight="bold" font-size="15.5" fill="#141414" textLength="29" lengthAdjust="spacingAndGlyphs">Sure</text><path d="M-43.1 56.5a5.6 8.2 0 1 0 11.2 0a5.6 8.2 0 1 0 -11.2 0z" fill="#fcd3ad" stroke="#171717" stroke-width="2.1"/><path d="M-38.5 52.500Q-41.5 56.500 -37.5 61" fill="none" stroke="#f3ae88" stroke-width="1.6"/><path d="M31.9 56.5a5.6 8.2 0 1 0 11.2 0a5.6 8.2 0 1 0 -11.2 0z" fill="#fcd3ad" stroke="#171717" stroke-width="2.1"/><path d="M38.5 52.500Q41.5 56.500 37.5 61" fill="none" stroke="#f3ae88" stroke-width="1.6"/><path d="M-32.5 40C-34 58-31 71-18 79C-8 85.500 8 85.500 18 79C31 71 34 58 33 40C32 20-32 20-32.500 40z" fill="#fcd3ad" stroke="#171717" stroke-width="2.1"/><path d="M-30 44C-29 34-26 29-21 26.500C-12 24 12 24 25 25.500C29 30 31 36 31.500 44C30 36 28 31 24 28C12 26.500-10 26.500-20 29C-25 32-28 37-30 44z" fill="#f3ae88"/><path d="M-36 49C-42 34-41.500 13-24 4.500C-10-2 12-2.500 23 3C27 2.500 32 6 35 11C41 20 42 36 37.500 50L32 47C32.500 37 30.500 29.500 25.500 24.500C10 23-12 22.500-22 25.500C-27.500 30-31 38-32 47z" fill="#191919" stroke="#171717" stroke-width="1.5"/><path d="M-24.2 11.5a3.2 1.7 0 1 0 6.4 0a3.2 1.7 0 1 0 -6.4 0z" fill="#4a4a4a" transform="rotate(-28 -21 11.500)"/><path d="M22.500 3.500C24 8 22 12 18 15" fill="none" stroke="#000" stroke-width="1.2"/><path d="M-22 39.5Q-17 34.5 -11.5 39" fill="none" stroke="#171717" stroke-width="3" stroke-linecap="round"/><path d="M22 39.5Q17 34.5 11.5 39" fill="none" stroke="#171717" stroke-width="3" stroke-linecap="round"/><path d="M-19.7 51.8a3.7 5.6 0 1 0 7.4 0a3.7 5.6 0 1 0 -7.4 0z" fill="#111"/><path d="M-15.9 48.8a0.9 1.2 0 1 0 1.8 0a0.9 1.2 0 1 0 -1.8 0z" fill="#fff"/><path d="M12.3 51.8a3.7 5.6 0 1 0 7.4 0a3.7 5.6 0 1 0 -7.4 0z" fill="#111"/><path d="M16.1 48.8a0.9 1.2 0 1 0 1.8 0a0.9 1.2 0 1 0 -1.8 0z" fill="#fff"/><g fill="none" stroke="#333" stroke-width="1.6" stroke-linecap="round"><rect x="-30.4" y="50.4" width="27.200" height="12.5" rx="6.500"/><path d="M-30.4 55.9L-33.8 55.4"/><rect x="3.2" y="50.4" width="27.200" height="12.5" rx="6.500"/><path d="M30.4 55.9L33.8 55.4"/><path d="M-3.200 57.2Q0 55 3.200 57.2"/></g><path d="M-1.6 61.6a1.6 1.6 0 1 0 3.2 0a1.6 1.6 0 1 0 -3.2 0z" fill="#e8744c"/><path d="M-11.6 69Q0 71.5 11.6 69Q9.2 80 0 80Q-9.2 80 -11.6 69z" fill="#7d1f1f" stroke="#171717" stroke-width="2" stroke-linecap="round" stroke-linejoin="round"/><path d="M-6.4 77.8Q0 73.6 6.4 77.8Q0 81.3 -6.4 77.8z" fill="#f2705e"/></g></svg>

  <!-- selection box -->
  <div class="abs" style="left:223.400px;top:186.200px;width:144px;height:163px;border:2px solid #1aa3cf;transform:rotate(-8.900deg);transform-origin:50% 50%">
    <div class="hd" style="left:-8px;top:-8px"></div><div class="hd" style="right:-8px;top:-8px"></div><div class="hd" style="left:-8px;bottom:-8px"></div><div class="hd" style="right:-8px;bottom:-8px"></div>
    <div class="hp" style="left:61px;top:-5px;width:18px;height:7px"></div><div class="hp" style="left:61px;bottom:-5px;width:18px;height:7px"></div>
    <div class="hp" style="left:-5px;top:70.500px;width:7px;height:18px"></div><div class="hp" style="right:-5px;top:70.500px;width:7px;height:18px"></div>
  </div>
  <div class="abs" style="left:298.300px;top:359.700px;width:25px;height:25px;border-radius:50%;background:#fff;border:1px solid #c9ccd4"></div>
  <svg class="abs" style="left:304.300px;top:365.700px" width="13" height="13" viewBox="0 0 13 13" fill="none" stroke="#333" stroke-width="1.100" stroke-linecap="round" stroke-linejoin="round"><path d="M1.500 5.500C2 3 4 1.800 6.500 1.800c1.800 0 3 0.700 4 2M10.800 1.500v2.500H8.300"/><path d="M11.500 7.500C11 10 9 11.200 6.500 11.200c-1.800 0-3-0.700-4-2M2.200 11.500V9h2.500"/></svg>
  <!-- floating mini toolbar -->
  <div class="abs" style="left:153px;top:119px;width:284px;height:44px;background:#fff;border-radius:6px;box-shadow:0 1px 4px rgba(40,50,80,0.18)"></div>
  <svg class="abs" style="left:175px;top:124px" width="30" height="32" viewBox="0 0 30 32" fill="none" stroke-linecap="round"><defs><linearGradient id="wg" x1="0" x2="1"><stop offset="0" stop-color="#1ccbc8"/><stop offset="0.600" stop-color="#1fb4d6"/><stop offset="1" stop-color="#2b8fe2"/></linearGradient></defs><path d="M1.600 30.600L7.400 17.800" stroke="#22b4d8" stroke-width="1.300"/><path d="M6.800 18.200C5 13 8 9.400 12 9.200C16 9 18 14.300 21.500 15C23.600 15.300 24.600 14 23.800 12.500C26.200 13.800 25.400 17.400 22 17.900C18 18.400 16 13.800 13 13.900C10.500 14 9.800 17 6.800 18.200z" fill="url(#wg)"/><path d="M7.300 1.200c0.500 2.600 1 3.100 3.600 3.600-2.600 0.500-3.100 1-3.600 3.600-0.500-2.600-1-3.100-3.600-3.600 2.600-0.500 3.100-1 3.600-3.600z" fill="#1cb6d2"/><path d="M16.700 18.900c0.300 1.800 0.700 2.200 2.500 2.500-1.800 0.300-2.200 0.700-2.500 2.500-0.300-1.800-0.700-2.200-2.500-2.500 1.800-0.300 2.200-0.700 2.500-2.500z" fill="#1cb6d2"/><path d="M21.400 9.500l0.200 1.400M26.400 10.800l0.900-0.900M26.400 15.300l1.100 0.100" stroke="#22c8c4" stroke-width="0.900"/></svg>
  <div class="abs" id="hb" style="left:209.500px;top:133px;font-size:13.700px;color:#222;white-space:nowrap;letter-spacing:0">Hô biến xoá nền</div>
  <svg class="abs" style="left:336px;top:130px" width="22" height="22" viewBox="0 0 22 22" fill="none" stroke="#1d1d1d" stroke-width="1.700" stroke-linecap="round" stroke-linejoin="round"><rect x="1.200" y="5.200" width="15" height="15" rx="3.500"/><path d="M6 1.500h10.500a4 4 0 0 1 4 4V16"/><path d="M8.700 9.500v6.400M5.500 12.700h6.400"/></svg>
  <svg class="abs" style="left:369px;top:129px" width="22" height="24" viewBox="0 0 22 24" fill="none" stroke="#1d1d1d" stroke-width="1.600" stroke-linecap="round" stroke-linejoin="round"><path d="M1.500 6h19M7.500 5.500V3.500a1.500 1.500 0 0 1 1.500-1.500h4a1.500 1.500 0 0 1 1.500 1.500v2"/><path d="M3.500 6.500l1.300 13a2.500 2.500 0 0 0 2.500 2.300h7.400a2.500 2.500 0 0 0 2.500-2.300l1.300-13"/><path d="M8 10.500v7M11 10.500v7M14 10.500v7" stroke-width="1.300"/></svg>
  <div class="abs" style="left:403px;top:139.500px;width:3px;height:3px;border-radius:50%;background:#1d1d1d;box-shadow:7px 0 0 #1d1d1d,14px 0 0 #1d1d1d"></div>
  <!-- top toolbar -->
  <div class="abs" style="left:111px;top:8px;width:620px;height:48px;background:#fff;border-radius:12px;box-shadow:0 3px 10px rgba(60,70,100,0.13)"></div>
  <svg class="abs" style="left:132px;top:23px" width="18" height="19" viewBox="0 0 18 19" fill="none" stroke="#454a66" stroke-width="1.400" stroke-linecap="round" stroke-linejoin="round"><path d="M10 1.500H5.500a4.500 4.500 0 0 0-4.500 4.500v7.500a4.500 4.500 0 0 0 4.500 4.500h7.500a4.500 4.500 0 0 0 4.500-4.500V8.500"/><circle cx="6.300" cy="6.300" r="1.600"/><path d="M1.500 13.500c2-2.500 4-3 6-1s4 2 5.500 0.500 3-1.500 4.300-0.500"/><path d="M14.500 0.800c0.200 1.700 0.700 2.200 2.400 2.400-1.700 0.200-2.200 0.700-2.400 2.400-0.200-1.700-0.700-2.200-2.400-2.400 1.700-0.200 2.200-0.700 2.400-2.400z" stroke-width="0.800" fill="#454a66"/></svg>
  <div class="abs sb" id="t1" style="left:155.300px;top:24.500px;font-size:13.600px;white-space:nowrap">Sửa hình ảnh</div>
  <div class="abs" style="left:254.500px;top:20px;width:1px;height:24px;background:#e3e5eb"></div>
  <svg class="abs" style="left:268px;top:23px" width="18" height="18" viewBox="0 0 18 18" fill="none" stroke="#454a66" stroke-width="1.300" stroke-linecap="round" stroke-linejoin="round"><path d="M6.500 11L14.500 1.800c0.800-0.900 2-0.900 2.600-0.300s0.600 1.800-0.300 2.600L8 12.500"/><path d="M6.500 11c-1.800-0.300-3.300 0.800-3.500 2.500-0.100 1.200-0.800 2-2 2.500 2.500 1.200 6.800 0.500 7-3.500z"/></svg>
  <div class="abs sb" id="t2" style="left:292.400px;top:24.500px;font-size:13.600px;letter-spacing:0.2px;white-space:nowrap">Tạo viền ảnh</div>
  <div class="abs" style="left:389.500px;top:20px;width:1px;height:24px;background:#e3e5eb"></div>
  <svg class="abs" style="left:403px;top:22px" width="17" height="19" viewBox="0 0 17 19" fill="none" stroke="#454a66" stroke-width="1.300" stroke-linecap="round" stroke-linejoin="round"><path d="M8.700 7.700l5.300 5.300-5.300 5.300-5.300-5.300z"/><path d="M15.500 6.500C14 3 11.500 1.500 8.500 1.500S3 3 1.800 5.500" stroke-width="1.500"/><path d="M1.200 2.300v3.900h3.900z" fill="#454a66" stroke-width="0.800"/></svg>
  <svg class="abs" style="left:436.500px;top:22px" width="17" height="19" viewBox="0 0 17 19" fill="none" stroke="#454a66" stroke-width="1.300" stroke-linecap="round" stroke-linejoin="round"><path d="M8.300 7.700l5.300 5.300-5.300 5.300L3 13z"/><path d="M1.500 6.500C3 3 5.500 1.500 8.500 1.500S14 3 15.200 5.500" stroke-width="1.500"/><path d="M15.800 2.300v3.900h-3.900z" fill="#454a66" stroke-width="0.800"/></svg>
  <div class="abs" style="left:466.500px;top:20px;width:1px;height:24px;background:#e3e5eb"></div>
  <svg class="abs" style="left:479px;top:22px" width="20" height="20" viewBox="0 0 20 20" fill="none" stroke="#454a66" stroke-width="1.100" stroke-linejoin="round"><path d="M0.800 5.500v9l5.700-4.500z"/><path d="M18.200 5.500v9L12 10z" fill="#454a66"/><path d="M9.500 1v18" stroke-dasharray="1.500 1.500"/></svg>
  <svg class="abs" style="left:513px;top:22px" width="20" height="20" viewBox="0 0 20 20" fill="none" stroke="#454a66" stroke-width="1.100" stroke-linejoin="round"><path d="M5.300 1.600h9l-4.500 5.500z"/><path d="M5.300 18.400h9l-4.500-6z" fill="#454a66"/><path d="M1 10h18" stroke-dasharray="1.500 1.500"/></svg>
  <div class="abs sb" id="t3" style="left:552px;top:24.500px;font-size:13.600px;letter-spacing:0.3px;white-space:nowrap">Vị trí lớp</div>
  <div class="abs" style="left:622.500px;top:20px;width:1px;height:24px;background:#e3e5eb"></div>
  <svg class="abs" style="left:635px;top:23px" width="19" height="18" viewBox="0 0 5 5" shape-rendering="crispEdges"><defs><linearGradient id="ck" x1="0" x2="1"><stop offset="0" stop-color="#363a5a"/><stop offset="0.500" stop-color="#5b6087"/><stop offset="1" stop-color="#b3b6d0"/></linearGradient></defs><path fill="url(#ck)" d="M0 0h1v1H0zM2 0h1v1H2zM4 0h1v1H4zM1 1h1v1H1zM3 1h1v1H3zM0 2h1v1H0zM2 2h1v1H2zM4 2h1v1H4zM1 3h1v1H1zM3 3h1v1H3zM0 4h1v1H0zM2 4h1v1H2zM4 4h1v1H4z"/></svg>
  <svg class="abs" style="left:671px;top:22px" width="17" height="19" viewBox="0 0 17 19" fill="none" stroke="#454a66" stroke-width="1.300" stroke-linecap="round" stroke-linejoin="round"><rect x="1.500" y="6.800" width="14.400" height="10.500" rx="1.500"/><path d="M5.500 6.500V4.500a3.300 3.300 0 0 1 6.200-1.500"/><circle cx="8.700" cy="11" r="1.400" stroke-width="1"/><path d="M8.700 12.500v2.300" stroke-width="1"/></svg>

  <!-- scrollbar -->
  <div class="abs" style="left:834.300px;top:3px;width:5.500px;height:732px;background:#dadde1;border-radius:3px"></div>
</div>

<div id="foot">
  <div class="abs" id="pg" style="left:418.500px;top:10px;font-size:16.200px;font-weight:bold;color:#454a66;white-space:nowrap;letter-spacing:-0.1px">Trang 1 / 1</div>
  <div class="abs" style="left:516px;top:6px;width:1px;height:32px;background:#dcdee4"></div>
  <div class="abs" style="left:526px;top:18.500px;width:192px;height:3px;border-radius:2px;background:#cfd1d8"></div>
  <div class="abs" style="left:525px;top:18px;width:8px;height:4px;border-radius:2px;background:#1aa3cf"></div>
  <div class="abs" style="left:529px;top:10.500px;width:19px;height:19px;border-radius:50%;background:#fff;border:1.500px solid #454a66"></div>
  <div class="abs" id="zm" style="left:744px;top:10px;font-size:16.500px;font-weight:bold;color:#454a66;white-space:nowrap">43%</div>
  <svg class="abs" style="left:806px;top:11px" width="18" height="18" viewBox="0 0 18 18" fill="none" stroke="#12a0b8" stroke-width="1.800" stroke-linecap="round" stroke-linejoin="round"><path d="M1 5.500V3a2 2 0 0 1 2-2h2.500M12.500 1H15a2 2 0 0 1 2 2v2.500M17 12.500V15a2 2 0 0 1-2 2h-2.500M5.500 17H3a2 2 0 0 1-2-2v-2.500"/></svg>
</div>
<div class="abs" style="left:1344.700px;top:0;width:1.300px;height:865px;background:#2a4758;z-index:50"></div>
<svg class="abs" style="left:1339px;top:858px;z-index:51" width="7" height="7" viewBox="0 0 7 7"><path d="M7 0v7H0c4 0 7-3 5.700-7z" fill="#1f3040"/></svg>
<svg class="abs" style="left:0;top:859px;z-index:51" width="6" height="6" viewBox="0 0 6 6"><path d="M0 0v6h6C2.500 6 0 3.500 0 0z" fill="#1f3040"/></svg>
<div class="abs" id="botshade" style="left:0;top:853px;width:1346px;height:12px;background:linear-gradient(to bottom,rgba(0,0,0,0),rgba(0,0,0,0.045));z-index:40;pointer-events:none"></div>

</body>
</html>
